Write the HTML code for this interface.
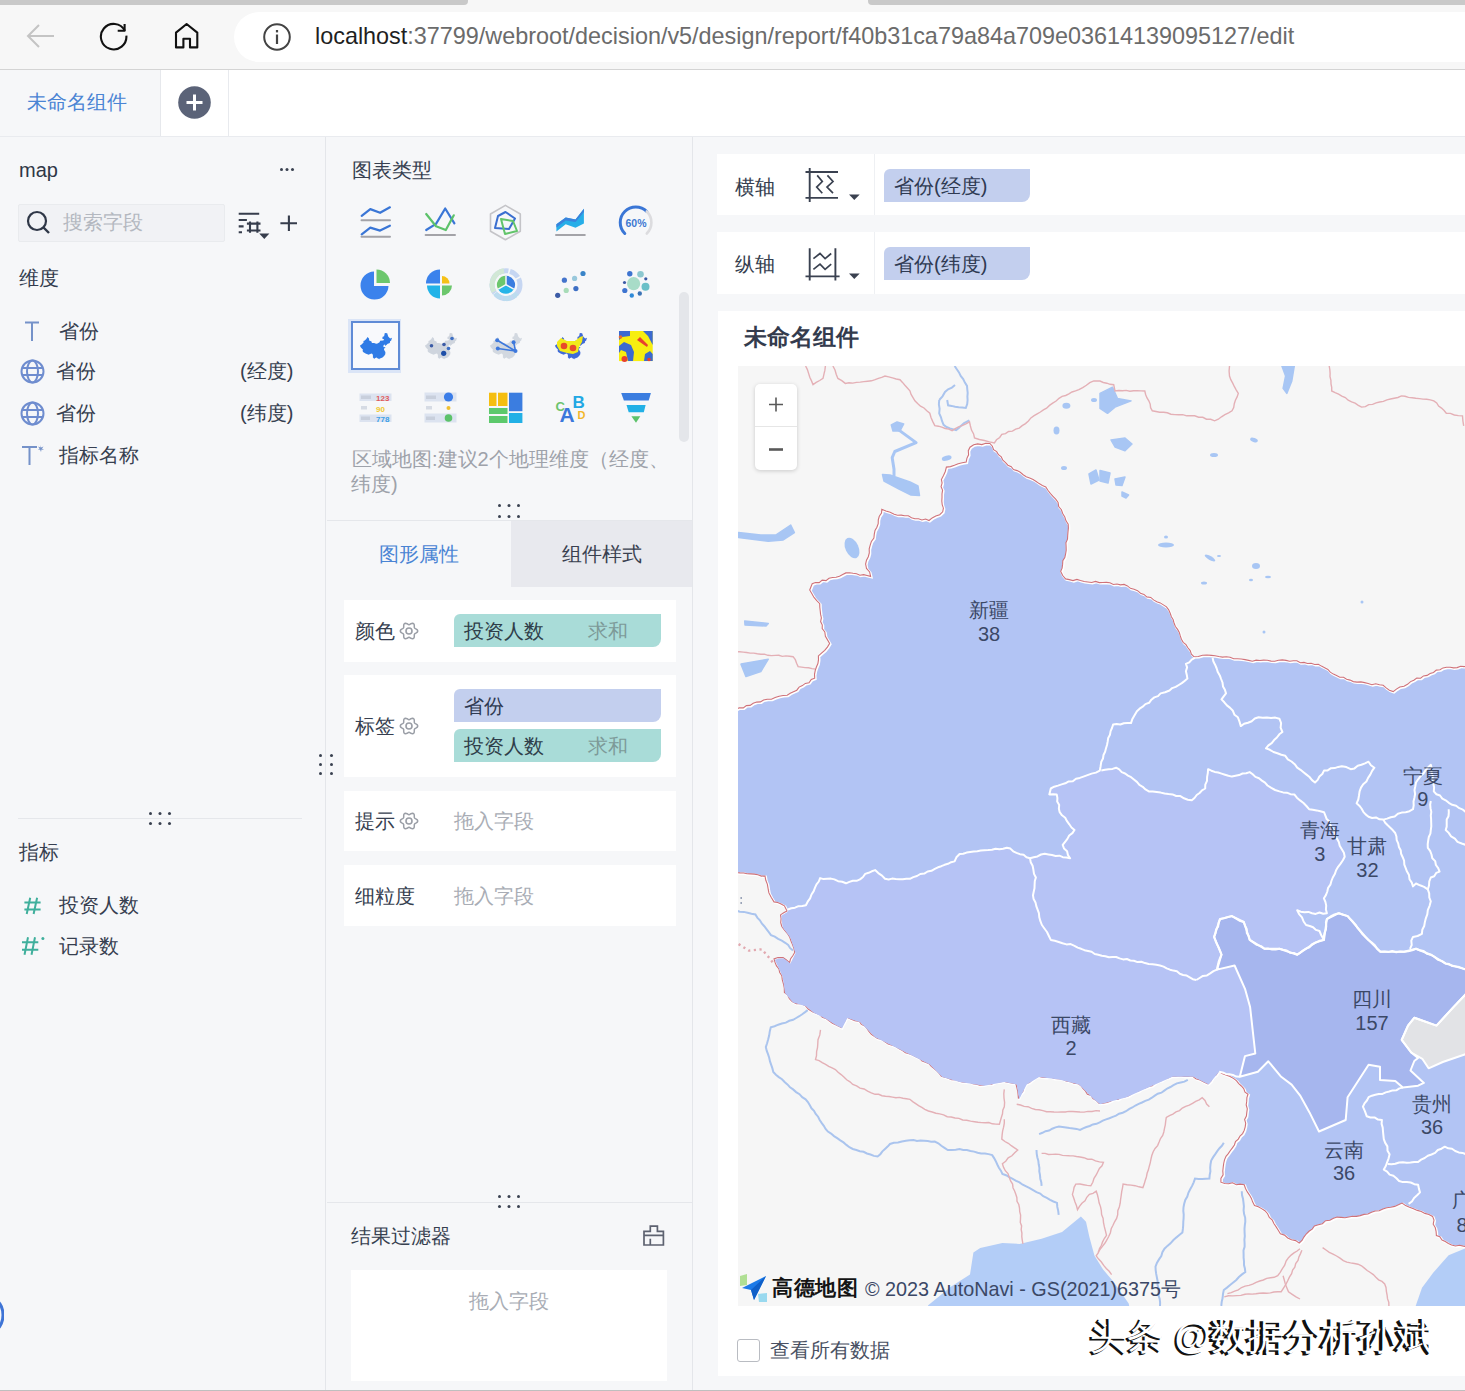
<!DOCTYPE html>
<html><head><meta charset="utf-8">
<style>
*{margin:0;padding:0;box-sizing:border-box}
html,body{width:1465px;height:1391px;overflow:hidden;background:#f7f7f7;font-family:"Liberation Sans",sans-serif;color:#373f50}
.a{position:absolute}
.t{position:absolute;white-space:nowrap;line-height:1;font-size:20px}
</style></head><body>
<!-- browser chrome -->
<div class="a" style="left:0;top:0;width:1465px;height:69px;background:#f7f7f7"></div>
<div class="a" style="left:0;top:0;width:468px;height:5px;background:#c9c9c9;border-radius:0 0 4px 0"></div>
<div class="a" style="left:868px;top:0;width:597px;height:5px;background:#c9c9c9;border-radius:0 0 0 4px"></div>
<div class="a" style="left:234px;top:12px;width:1300px;height:50px;background:#fff;border-radius:25px"></div>
<div class="a" style="left:0;top:69px;width:1465px;height:1px;background:#d4d4d4"></div>
<!-- back arrow -->
<svg class="a" style="left:24px;top:20px" width="34" height="32" viewBox="0 0 34 32"><path d="M4 16 H30 M15 5 L4 16 L15 27" fill="none" stroke="#c4c4c4" stroke-width="2"/></svg>
<!-- refresh -->
<svg class="a" style="left:98px;top:20px" width="32" height="32" viewBox="0 0 32 32"><path d="M28.35 15.54 A12.75 12.75 0 1 1 26.91 10.66" fill="none" stroke="#111" stroke-width="2.1"/><path d="M19.7 10.8 H26.6 V4" fill="none" stroke="#111" stroke-width="2.1" stroke-linejoin="round"/></svg>
<!-- home -->
<svg class="a" style="left:170px;top:18px" width="34" height="34" viewBox="170 18 34 34"><path d="M176 47.4 V32.6 L186.6 24 L197.3 32.6 V47.4 H190 V38.75 H183.4 V47.4 Z" fill="none" stroke="#111" stroke-width="2.1" stroke-linejoin="round"/></svg>
<!-- info -->
<svg class="a" style="left:262px;top:22px" width="30" height="30" viewBox="0 0 30 30"><circle cx="15" cy="15" r="12.8" fill="none" stroke="#444" stroke-width="2"/><rect x="13.9" y="8" width="2.2" height="2.4" fill="#444"/><rect x="13.9" y="12.5" width="2.2" height="9.5" fill="#444"/></svg>
<div class="t" style="left:315px;top:25px;font-size:23.4px;color:#1f1f1f">localhost<span style="color:#6b6b6b">:37799/webroot/decision/v5/design/report/f40b31ca79a84a709e03614139095127/edit</span></div>

<!-- tab row -->
<div class="a" style="left:0;top:70px;width:1465px;height:66px;background:#fff"></div>
<div class="a" style="left:0;top:70px;width:161px;height:66px;background:#f6f7f9;border-right:1px solid #e6e8ec"></div>
<div class="a" style="left:228px;top:70px;width:1px;height:66px;background:#e8eaee"></div>
<div class="t" style="left:27px;top:92px;color:#4a84d4">未命名组件</div>
<svg class="a" style="left:178px;top:86px" width="33" height="33" viewBox="0 0 33 33"><circle cx="16.5" cy="16.5" r="16.3" fill="#5b6378"/><path d="M16.5 8.5 V24.5 M8.5 16.5 H24.5" stroke="#fff" stroke-width="3"/></svg>
<div class="a" style="left:0;top:136px;width:1465px;height:1px;background:#e9ebef"></div>

<!-- left panel -->
<div class="a" style="left:0;top:137px;width:326px;height:1253px;background:#f6f7f9;border-right:1px solid #e4e6ea"></div>

<!-- left panel content -->
<div class="t" style="left:19px;top:160px;color:#2f3747">map</div>
<div class="a" style="left:280px;top:168px;width:3px;height:3px;border-radius:50%;background:#3a4150;box-shadow:5.5px 0 0 #3a4150,11px 0 0 #3a4150"></div>
<div class="a" style="left:18px;top:204px;width:207px;height:38px;background:#f1f2f5;border:1px solid #e9ebee;border-radius:2px"></div>
<svg class="a" style="left:25px;top:209px" width="28" height="28" viewBox="0 0 28 28"><circle cx="12" cy="12" r="9" fill="none" stroke="#2f3747" stroke-width="2.2"/><path d="M18.5 18.5 L24 24" stroke="#2f3747" stroke-width="2.4"/></svg>
<div class="t" style="left:63px;top:212px;color:#b4b8c0">搜索字段</div>
<svg class="a" style="left:230px;top:200px" width="45" height="45" viewBox="0 0 45 45"><g stroke="#363d4c" stroke-width="2.1" fill="none"><path d="M8.7 13.8 H29.2 M8.7 20 H16.9 M8.7 26.4 H13.6 M8.7 32.3 H12 M20 21.5 V32.8 M27.4 21.5 V32.8 M16.9 23.6 H30.5 M16.9 30.5 H30.5"/></g><path d="M29.2 33.5 H39.4 L34.3 39 Z" fill="#363d4c"/><path d="M58.9 15.4 V31 M50.4 23.3 H67" stroke="#363d4c" stroke-width="2.1"/></svg>
<svg class="a" style="left:275px;top:200px" width="30" height="45" viewBox="45 0 30 45"><path d="M58.9 15.4 V31 M50.4 23.3 H67" stroke="#363d4c" stroke-width="2.1"/></svg>
<div class="t" style="left:19px;top:268px;color:#333b4d">维度</div>

<svg class="a" style="left:22px;top:320px" width="20" height="22" viewBox="0 0 20 22"><path d="M3 2.5 H17 M10 2.5 V21" stroke="#7592c9" stroke-width="2"/></svg>
<div class="t" style="left:59px;top:321px">省份</div>
<svg class="a" style="left:20px;top:359px" width="25" height="25" viewBox="0 0 25 25"><g fill="none" stroke="#6f8dcf" stroke-width="2"><circle cx="12.5" cy="12.5" r="11"/><ellipse cx="12.5" cy="12.5" rx="5.5" ry="11"/><path d="M2.3 9 H22.7 M2.3 16 H22.7"/></g></svg>
<div class="t" style="left:56px;top:361px">省份</div>
<div class="t" style="left:240px;top:361px">(经度)</div>
<svg class="a" style="left:20px;top:401px" width="25" height="25" viewBox="0 0 25 25"><g fill="none" stroke="#6f8dcf" stroke-width="2"><circle cx="12.5" cy="12.5" r="11"/><ellipse cx="12.5" cy="12.5" rx="5.5" ry="11"/><path d="M2.3 9 H22.7 M2.3 16 H22.7"/></g></svg>
<div class="t" style="left:56px;top:403px">省份</div>
<div class="t" style="left:240px;top:403px">(纬度)</div>
<svg class="a" style="left:20px;top:444px" width="26" height="22" viewBox="0 0 26 22"><path d="M2 3 H17 M9.5 3 V21" stroke="#7592c9" stroke-width="2"/><path d="M20 1 L21 3.5 L23.5 2.5 L22 4.5 L24 6 L21.5 5.5 L21 8 L20 5.5 L18 6 L19.5 4.5 L18 2.5 L20.5 3.5Z" fill="#7592c9"/></svg>
<div class="t" style="left:59px;top:445px">指标名称</div>


<div class="a" style="left:18px;top:818px;width:284px;height:1px;background:#e5e7eb"></div>
<div class="a" style="left:149px;top:812px;width:3px;height:3px;border-radius:50%;background:#3a4150;box-shadow:9.5px 0 0 #3a4150,19px 0 0 #3a4150,0 10px 0 #3a4150,9.5px 10px 0 #3a4150,19px 10px 0 #3a4150"></div>
<div class="t" style="left:19px;top:842px">指标</div>
<svg class="a" style="left:20px;top:894px" width="24" height="24" viewBox="20 894 24 24"><path d="M30.2 897.8 L26.7 914 M37.1 897.8 L33.6 914 M24.4 902.5 H40.6 M24.4 909.4 H40.6" stroke="#3faf9c" stroke-width="2"/></svg>
<div class="t" style="left:59px;top:895px">投资人数</div>
<svg class="a" style="left:18px;top:932px" width="30" height="26" viewBox="18 932 30 26"><path d="M28 937.3 L24.5 954.7 M35 937.3 L31.5 954.7 M22 942.3 H38.3 M22 949.7 H38.3" stroke="#3faf9c" stroke-width="2"/><circle cx="42.9" cy="938.4" r="1.5" fill="#3faf9c"/></svg>

<div class="t" style="left:59px;top:936px">记录数</div>
<svg class="a" style="left:0;top:1298px" width="4" height="34" viewBox="0 0 4 34"><ellipse cx="-8" cy="17" rx="11" ry="16" fill="none" stroke="#3e74d6" stroke-width="3"/></svg>

<!-- middle panel -->
<div class="a" style="left:326px;top:137px;width:367px;height:1253px;background:#f6f7f9;border-right:1px solid #e4e6ea"></div>

<!-- middle panel content -->
<div class="t" style="left:352px;top:160px">图表类型</div>
<div class="a" style="left:348px;top:319px;width:53px;height:54px;background:#dbe5f7"></div>
<div class="a" style="left:351px;top:321px;width:49px;height:49px;background:#f8f9fc;border:2px solid #5f8bd6"></div>
<div class="a" style="left:679px;top:292px;width:10px;height:150px;background:#e4e6ea;border-radius:5px"></div>
<svg class="a" style="left:340px;top:190px" width="330" height="250" viewBox="340 190 330 250">
<g fill="none" stroke-linecap="round" stroke-linejoin="round">
 <path d="M361.7 215.9 L370.3 209.1 L380.1 212.8 L389.9 207.3 M361.7 234.3 L370.3 227.6 L380.1 230.6 L389.9 225.7" stroke="#3a76d6" stroke-width="2.2"/>
 <path d="M361.5 220.2 H390 M361.5 236.8 H390" stroke="#a3a3a8" stroke-width="2"/>
 <path d="M426.2 230 L436 223.9 L445.2 208.5 L454.4 223.3" stroke="#3a76d6" stroke-width="2.2"/>
 <path d="M426.2 214 L436 226.3 L445.8 230 L453.8 215.3" stroke="#5cc26a" stroke-width="2.2"/>
 <path d="M425.6 234.9 H455" stroke="#a3a3a8" stroke-width="2"/>
 <path d="M505.4 205.4 L520.3 214 V231.2 L505.4 239.8 L490.5 231.2 V214 Z" stroke="#c4c4c8" stroke-width="1.6"/>
 <path d="M505.5 212 L515 218.5 L509 229 L495 228 L498 216 Z" stroke="#3a6fd0" stroke-width="2"/>
 <path d="M501 219 L513 221 L517 231 L505 234 Z" stroke="#62c46a" stroke-width="2"/>
 <path d="M556 235.1 H584.8" stroke="#a3a3a8" stroke-width="2"/>
 <path d="M624.8 233.5 A15.5 15.5 0 1 1 646.8 211.5" stroke="#3a76d6" stroke-width="3"/>
 <path d="M646.8 211.5 A15.5 15.5 0 0 1 646.8 233.5" stroke="#dcdcdf" stroke-width="2.6"/>
</g>
<path d="M556.4 224.3 L565.7 217.6 L575.5 219.4 L583.9 208.8 V223.4 L575.5 227.8 L565.7 224.3 L556.4 231.4 Z" fill="#27aee8"/>
<path d="M556.4 224.3 L565.7 217.6 L575.5 219.4 L583.9 208.8 L583.9 212 L575.5 222 L565.7 220.6 L556.4 227.5 Z" fill="#3a82dc"/>
<text x="636" y="226.8" font-size="10.5" font-weight="bold" fill="#3d79d2" text-anchor="middle" font-family="Liberation Sans">60%</text>
<!-- pie -->
<path d="M374 271.5 A14 14 0 1 0 388.5 286 H374 Z" fill="#3b82ec"/>
<path d="M376.5 269.5 A13.5 13.5 0 0 1 390 283 H376.5 Z" fill="#6cc76d"/>
<!-- quarter pie -->
<path d="M440 269.5 A14 14 0 0 0 426 283.5 H440 Z" fill="#3b82ec"/>
<path d="M442 276 A7.5 7.5 0 0 1 449.5 283.5 H442 Z" fill="#f5c118"/>
<path d="M440 285.5 H427 A13 13 0 0 0 440 298.5 Z" fill="#22b3e8"/>
<path d="M442 285.5 H452 A10 10 0 0 1 442 295.5 Z" fill="#6cc76d"/>
<!-- donut -->
<g transform="translate(506 284.7)">
 <circle r="14" fill="none" stroke="#c6d6f2" stroke-width="5" stroke-dasharray="10 1.6"/>
 <path d="M-12 7 A14 14 0 0 1 -2 -13.9" fill="none" stroke="#d2e8d6" stroke-width="5"/>
 <path d="M-11 8.5 A14 14 0 0 0 11 8.5" fill="none" stroke="#bcdcef" stroke-width="5" stroke-dasharray="8 1.6"/>
 <path d="M0 -9 A9 9 0 0 1 7.8 4.5 L0 0Z" fill="#3b7de0"/>
 <path d="M7.8 4.5 A9 9 0 0 1 -7.8 4.5 L0 0Z" fill="#26b4e8"/>
 <path d="M-7.8 4.5 A9 9 0 0 1 0 -9 L0 0Z" fill="#6cc76d"/>
 <path d="M0 -9 L0 0 L7.8 4.5 M0 0 L-7.8 4.5" fill="none" stroke="#f5f6f8" stroke-width="1.5"/>
 <circle r="4" fill="#f5f6f8" opacity="0"/>
</g>
<!-- scatter -->
<circle cx="557.7" cy="295.3" r="2.6" fill="#3b5ba6"/>
<circle cx="566.2" cy="290.4" r="2.6" fill="#a8dcb8"/>
<circle cx="564.4" cy="280.2" r="2.6" fill="#4474cc"/>
<circle cx="574.6" cy="278.4" r="2.6" fill="#98c8dc"/>
<circle cx="575.9" cy="288.6" r="2.6" fill="#3d6fc4"/>
<circle cx="583" cy="273.5" r="2.6" fill="#3a84c8"/>
<!-- bubble -->
<circle cx="633.6" cy="283.7" r="6.6" fill="#a8dcc8"/>
<circle cx="629.8" cy="273.8" r="2.7" fill="#3d74d0"/>
<circle cx="640.5" cy="274.3" r="3.3" fill="#8cc8d0"/>
<circle cx="645.8" cy="278.8" r="1.6" fill="#3b5ba6"/>
<circle cx="624.5" cy="282.5" r="1.6" fill="#3b5ba6"/>
<circle cx="645.5" cy="286.7" r="4" fill="#6cc0c8"/>
<circle cx="624.8" cy="290.5" r="2.6" fill="#3d74d0"/>
<circle cx="631.8" cy="295.5" r="2.2" fill="#2f8ad8"/>
<circle cx="639.8" cy="293.5" r="2.2" fill="#3b74b6"/>
<!-- china map icons -->
<path d="M360.0 345.5 L360.5 347.1 L361.8 348.6 L362.9 349.4 L362.6 350.9 L363.1 352.0 L363.9 352.6 L366.0 353.8 L367.6 354.2 L368.1 354.7 L369.7 354.3 L371.5 353.4 L372.5 354.0 L373.1 356.3 L372.7 356.9 L373.6 358.2 L374.6 358.8 L375.2 358.0 L376.7 357.6 L377.4 358.3 L378.0 358.6 L379.1 359.0 L379.3 359.5 L379.6 358.6 L380.7 358.2 L382.5 357.6 L384.1 355.9 L385.3 354.2 L385.4 352.1 L384.7 350.9 L383.9 349.2 L384.6 348.1 L385.6 347.2 L384.8 346.9 L383.8 347.3 L383.3 346.3 L383.2 345.7 L385.1 344.3 L384.9 345.9 L386.4 345.1 L387.7 343.7 L388.6 343.4 L389.8 343.0 L390.2 340.9 L391.1 340.8 L392.0 337.8 L390.1 338.4 L388.2 336.6 L387.2 333.2 L384.8 333.0 L384.1 336.2 L382.7 336.7 L382.2 338.4 L384.2 339.4 L383.3 340.4 L380.1 340.8 L379.6 342.2 L377.5 343.4 L376.2 343.7 L374.1 342.9 L371.9 342.9 L371.5 341.5 L369.2 340.4 L369.0 338.4 L367.5 337.1 L366.3 339.0 L364.7 340.4 L363.4 340.9 L363.6 342.6 L361.3 344.7 Z" fill="#2f7be6"/>
<g transform="translate(65 0)">
<path d="M360.0 345.5 L360.5 347.1 L361.8 348.6 L362.9 349.4 L362.6 350.9 L363.1 352.0 L363.9 352.6 L366.0 353.8 L367.6 354.2 L368.1 354.7 L369.7 354.3 L371.5 353.4 L372.5 354.0 L373.1 356.3 L372.7 356.9 L373.6 358.2 L374.6 358.8 L375.2 358.0 L376.7 357.6 L377.4 358.3 L378.0 358.6 L379.1 359.0 L379.3 359.5 L379.6 358.6 L380.7 358.2 L382.5 357.6 L384.1 355.9 L385.3 354.2 L385.4 352.1 L384.7 350.9 L383.9 349.2 L384.6 348.1 L385.6 347.2 L384.8 346.9 L383.8 347.3 L383.3 346.3 L383.2 345.7 L385.1 344.3 L384.9 345.9 L386.4 345.1 L387.7 343.7 L388.6 343.4 L389.8 343.0 L390.2 340.9 L391.1 340.8 L392.0 337.8 L390.1 338.4 L388.2 336.6 L387.2 333.2 L384.8 333.0 L384.1 336.2 L382.7 336.7 L382.2 338.4 L384.2 339.4 L383.3 340.4 L380.1 340.8 L379.6 342.2 L377.5 343.4 L376.2 343.7 L374.1 342.9 L371.9 342.9 L371.5 341.5 L369.2 340.4 L369.0 338.4 L367.5 337.1 L366.3 339.0 L364.7 340.4 L363.4 340.9 L363.6 342.6 L361.3 344.7 Z" fill="#cfd5de"/>
</g>
<circle cx="431.5" cy="345.8" r="1.8" fill="#3b5ba6"/><circle cx="444" cy="344.5" r="1.8" fill="#3b5ba6"/><circle cx="448.5" cy="348.5" r="1.8" fill="#3d6fc4"/><circle cx="443.7" cy="353.3" r="2.6" fill="#1e4fa8"/><circle cx="452" cy="338.5" r="1.8" fill="#3d6fc4"/>
<g transform="translate(130 0)">
<path d="M360.0 345.5 L360.5 347.1 L361.8 348.6 L362.9 349.4 L362.6 350.9 L363.1 352.0 L363.9 352.6 L366.0 353.8 L367.6 354.2 L368.1 354.7 L369.7 354.3 L371.5 353.4 L372.5 354.0 L373.1 356.3 L372.7 356.9 L373.6 358.2 L374.6 358.8 L375.2 358.0 L376.7 357.6 L377.4 358.3 L378.0 358.6 L379.1 359.0 L379.3 359.5 L379.6 358.6 L380.7 358.2 L382.5 357.6 L384.1 355.9 L385.3 354.2 L385.4 352.1 L384.7 350.9 L383.9 349.2 L384.6 348.1 L385.6 347.2 L384.8 346.9 L383.8 347.3 L383.3 346.3 L383.2 345.7 L385.1 344.3 L384.9 345.9 L386.4 345.1 L387.7 343.7 L388.6 343.4 L389.8 343.0 L390.2 340.9 L391.1 340.8 L392.0 337.8 L390.1 338.4 L388.2 336.6 L387.2 333.2 L384.8 333.0 L384.1 336.2 L382.7 336.7 L382.2 338.4 L384.2 339.4 L383.3 340.4 L380.1 340.8 L379.6 342.2 L377.5 343.4 L376.2 343.7 L374.1 342.9 L371.9 342.9 L371.5 341.5 L369.2 340.4 L369.0 338.4 L367.5 337.1 L366.3 339.0 L364.7 340.4 L363.4 340.9 L363.6 342.6 L361.3 344.7 Z" fill="#d2d8e0"/>
</g>
<path d="M497.2 340.3 L515.5 351 M497.8 348.5 L515.5 351 M513.6 342.2 L515.5 351" fill="none" stroke="#3d78dc" stroke-width="1.6"/>

<circle cx="497.2" cy="340.3" r="2" fill="#3d78dc"/><circle cx="497.8" cy="348.5" r="2" fill="#3d78dc"/><circle cx="515.5" cy="351" r="2" fill="#3d78dc"/><circle cx="513.6" cy="342.2" r="2" fill="#3d78dc"/>
<g transform="translate(195 0)">
<path d="M360.0 345.5 L360.5 347.1 L361.8 348.6 L362.9 349.4 L362.6 350.9 L363.1 352.0 L363.9 352.6 L366.0 353.8 L367.6 354.2 L368.1 354.7 L369.7 354.3 L371.5 353.4 L372.5 354.0 L373.1 356.3 L372.7 356.9 L373.6 358.2 L374.6 358.8 L375.2 358.0 L376.7 357.6 L377.4 358.3 L378.0 358.6 L379.1 359.0 L379.3 359.5 L379.6 358.6 L380.7 358.2 L382.5 357.6 L384.1 355.9 L385.3 354.2 L385.4 352.1 L384.7 350.9 L383.9 349.2 L384.6 348.1 L385.6 347.2 L384.8 346.9 L383.8 347.3 L383.3 346.3 L383.2 345.7 L385.1 344.3 L384.9 345.9 L386.4 345.1 L387.7 343.7 L388.6 343.4 L389.8 343.0 L390.2 340.9 L391.1 340.8 L392.0 337.8 L390.1 338.4 L388.2 336.6 L387.2 333.2 L384.8 333.0 L384.1 336.2 L382.7 336.7 L382.2 338.4 L384.2 339.4 L383.3 340.4 L380.1 340.8 L379.6 342.2 L377.5 343.4 L376.2 343.7 L374.1 342.9 L371.9 342.9 L371.5 341.5 L369.2 340.4 L369.0 338.4 L367.5 337.1 L366.3 339.0 L364.7 340.4 L363.4 340.9 L363.6 342.6 L361.3 344.7 Z" fill="#3e6ad8"/>
<path d="M362 342 L366 338 L372 341 L380 341 L385 337 L388 336 L387 342 L384 347 L383 352 L378 354 L372 353 L365 351 L362 346 Z" fill="#f1ea1a"/>
<circle cx="369" cy="346" r="3.3" fill="#e84a2a"/><circle cx="378" cy="348" r="3.3" fill="#e84a2a"/>
</g>
<!-- heat square -->
<rect x="619" y="331" width="33.7" height="30.1" fill="#f7ee10"/>
<path d="M619 331 H630 V336 L622 337 L619 340Z M643 331 H652.7 V345 L648 336 Z M619 346 L624 342 L631 345 L634 352 L633 361.1 H628 L626 352 L621 350 L619 353Z M644 361.1 L645 354 L650 351 L652.7 354 V361.1Z" fill="#3b6ad0"/>
<circle cx="624.5" cy="359" r="3" fill="#e8412e"/><path d="M637 340 L640 337 L648 345 L647 347Z" fill="#e8412e"/><circle cx="620.5" cy="337" r="1.8" fill="#e86a2e"/><circle cx="649" cy="359.5" r="1.8" fill="#e8412e"/>
<!-- table icons -->
<rect x="359.5" y="393.5" width="32" height="7.5" fill="#dce3f0"/><rect x="359.5" y="414.5" width="32" height="7.5" fill="#dce3f0"/>
<rect x="361" y="395.5" width="10" height="3.5" fill="#c8cfdc"/><rect x="361" y="406" width="6" height="3.5" fill="#d6dbe4"/><rect x="361" y="416.5" width="9" height="3.5" fill="#c8cfdc"/>
<text x="376" y="400.5" font-size="8" font-weight="bold" fill="#e25a5a" font-family="Liberation Sans">123</text>
<text x="376" y="411.5" font-size="8" font-weight="bold" fill="#f0c830" font-family="Liberation Sans">90</text>
<text x="376" y="421.8" font-size="8" font-weight="bold" fill="#3aa0e8" font-family="Liberation Sans">778</text>
<rect x="424.5" y="392.5" width="32" height="9" fill="#dce3f0"/><rect x="424.5" y="413.5" width="32" height="9" fill="#dce3f0"/>
<rect x="426" y="395.5" width="10" height="3.5" fill="#c8cfdc"/><rect x="426" y="406" width="6" height="3.5" fill="#d6dbe4"/><rect x="426" y="416.5" width="9" height="3.5" fill="#c8cfdc"/>
<circle cx="448.5" cy="397" r="4.6" fill="#3b7de8"/><circle cx="448.5" cy="408" r="2" fill="#f0c030"/><circle cx="448.5" cy="418" r="3.8" fill="#5cc26a"/>
<!-- treemap -->
<rect x="489" y="392.7" width="7.5" height="13.3" fill="#f5be10"/><rect x="498" y="392.7" width="9.5" height="13.3" fill="#f5be10"/>
<rect x="509" y="392.7" width="13.4" height="18.5" fill="#3b7de0"/>
<rect x="489" y="408" width="18.5" height="6" fill="#5cc96c"/><rect x="489" y="416" width="18.5" height="7" fill="#5cc96c"/>
<rect x="509" y="413" width="13.4" height="10" fill="#22b0e6"/>
<!-- word cloud -->
<text x="555.5" y="410.5" font-size="13" font-weight="bold" fill="#6cc46e" font-family="Liberation Sans">C</text>
<text x="572.5" y="407.5" font-size="17" font-weight="bold" fill="#22a8e4" font-family="Liberation Sans">B</text>
<text x="559.5" y="421.5" font-size="21" font-weight="bold" fill="#3b78dc" font-family="Liberation Sans">A</text>
<text x="577.5" y="419" font-size="11" font-weight="bold" fill="#f2b62a" font-family="Liberation Sans">D</text>
<!-- funnel -->
<path d="M621.2 393 H650.9 L648.7 400.6 H623.9Z" fill="#3b7de0"/>
<path d="M626.5 405 H645.6 L643.8 412.2 H628.7Z" fill="#22b0e6"/>
<path d="M631.4 416.2 H640.3 L636 422.8Z" fill="#5cc26a"/>
</svg>
<div class="t" style="left:352px;top:449px;color:#9ea2aa;font-size:20px">区域地图:建议2个地理维度（经度、</div>
<div class="t" style="left:351px;top:474px;color:#9ea2aa;font-size:20px">纬度)</div>
<div class="a" style="left:498px;top:504px;width:3px;height:3px;border-radius:50%;background:#3a4150;box-shadow:9.5px 0 0 #3a4150,19px 0 0 #3a4150,0 11px 0 #3a4150,9.5px 11px 0 #3a4150,19px 11px 0 #3a4150"></div>
<div class="a" style="left:327px;top:520px;width:365px;height:1px;background:#e5e7eb"></div>
<div class="a" style="left:511px;top:521px;width:181px;height:66px;background:#e8e9ee"></div>
<div class="t" style="left:379px;top:544px;color:#4a84d4">图形属性</div>
<div class="t" style="left:562px;top:544px;color:#3a4150">组件样式</div>

<div class="a" style="left:344px;top:600px;width:332px;height:62px;background:#fff"></div>
<div class="a" style="left:344px;top:675px;width:332px;height:102px;background:#fff"></div>
<div class="a" style="left:344px;top:791px;width:332px;height:60px;background:#fff"></div>
<div class="a" style="left:344px;top:865px;width:332px;height:61px;background:#fff"></div>

<div class="t" style="left:355px;top:621px">颜色</div>
<div class="t" style="left:355px;top:716px">标签</div>
<div class="t" style="left:355px;top:811px">提示</div>
<div class="t" style="left:355px;top:886px">细粒度</div>
<svg class="a" style="left:398.6px;top:621px" width="20" height="20" viewBox="0 0 20 20"><path d="M10.00 3.70 L10.56 3.56 L11.20 3.20 L11.94 2.76 L12.77 2.39 L13.61 2.26 L14.35 2.47 L14.90 3.01 L15.21 3.80 L15.30 4.70 L15.29 5.56 L15.29 6.29 L15.46 6.85 L15.86 7.27 L16.48 7.64 L17.24 8.06 L17.98 8.59 L18.51 9.26 L18.70 10.00 L18.51 10.74 L17.98 11.41 L17.24 11.94 L16.48 12.36 L15.86 12.73 L15.46 13.15 L15.29 13.71 L15.29 14.44 L15.30 15.30 L15.21 16.20 L14.90 16.99 L14.35 17.53 L13.61 17.74 L12.77 17.61 L11.94 17.24 L11.20 16.80 L10.56 16.44 L10.00 16.30 L9.44 16.44 L8.80 16.80 L8.06 17.24 L7.23 17.61 L6.39 17.74 L5.65 17.53 L5.10 16.99 L4.79 16.20 L4.70 15.30 L4.71 14.44 L4.71 13.71 L4.54 13.15 L4.14 12.73 L3.52 12.36 L2.76 11.94 L2.02 11.41 L1.49 10.74 L1.30 10.00 L1.49 9.26 L2.02 8.59 L2.76 8.06 L3.52 7.64 L4.14 7.27 L4.54 6.85 L4.71 6.29 L4.71 5.56 L4.70 4.70 L4.79 3.80 L5.10 3.01 L5.65 2.47 L6.39 2.26 L7.23 2.39 L8.06 2.76 L8.80 3.20 L9.44 3.56 Z" fill="none" stroke="#9a9ea6" stroke-width="1.5" stroke-linejoin="round"/><circle cx="10" cy="10" r="3" fill="none" stroke="#9a9ea6" stroke-width="1.6"/></svg>
<svg class="a" style="left:398.6px;top:716px" width="20" height="20" viewBox="0 0 20 20"><path d="M10.00 3.70 L10.56 3.56 L11.20 3.20 L11.94 2.76 L12.77 2.39 L13.61 2.26 L14.35 2.47 L14.90 3.01 L15.21 3.80 L15.30 4.70 L15.29 5.56 L15.29 6.29 L15.46 6.85 L15.86 7.27 L16.48 7.64 L17.24 8.06 L17.98 8.59 L18.51 9.26 L18.70 10.00 L18.51 10.74 L17.98 11.41 L17.24 11.94 L16.48 12.36 L15.86 12.73 L15.46 13.15 L15.29 13.71 L15.29 14.44 L15.30 15.30 L15.21 16.20 L14.90 16.99 L14.35 17.53 L13.61 17.74 L12.77 17.61 L11.94 17.24 L11.20 16.80 L10.56 16.44 L10.00 16.30 L9.44 16.44 L8.80 16.80 L8.06 17.24 L7.23 17.61 L6.39 17.74 L5.65 17.53 L5.10 16.99 L4.79 16.20 L4.70 15.30 L4.71 14.44 L4.71 13.71 L4.54 13.15 L4.14 12.73 L3.52 12.36 L2.76 11.94 L2.02 11.41 L1.49 10.74 L1.30 10.00 L1.49 9.26 L2.02 8.59 L2.76 8.06 L3.52 7.64 L4.14 7.27 L4.54 6.85 L4.71 6.29 L4.71 5.56 L4.70 4.70 L4.79 3.80 L5.10 3.01 L5.65 2.47 L6.39 2.26 L7.23 2.39 L8.06 2.76 L8.80 3.20 L9.44 3.56 Z" fill="none" stroke="#9a9ea6" stroke-width="1.5" stroke-linejoin="round"/><circle cx="10" cy="10" r="3" fill="none" stroke="#9a9ea6" stroke-width="1.6"/></svg>
<svg class="a" style="left:398.6px;top:811px" width="20" height="20" viewBox="0 0 20 20"><path d="M10.00 3.70 L10.56 3.56 L11.20 3.20 L11.94 2.76 L12.77 2.39 L13.61 2.26 L14.35 2.47 L14.90 3.01 L15.21 3.80 L15.30 4.70 L15.29 5.56 L15.29 6.29 L15.46 6.85 L15.86 7.27 L16.48 7.64 L17.24 8.06 L17.98 8.59 L18.51 9.26 L18.70 10.00 L18.51 10.74 L17.98 11.41 L17.24 11.94 L16.48 12.36 L15.86 12.73 L15.46 13.15 L15.29 13.71 L15.29 14.44 L15.30 15.30 L15.21 16.20 L14.90 16.99 L14.35 17.53 L13.61 17.74 L12.77 17.61 L11.94 17.24 L11.20 16.80 L10.56 16.44 L10.00 16.30 L9.44 16.44 L8.80 16.80 L8.06 17.24 L7.23 17.61 L6.39 17.74 L5.65 17.53 L5.10 16.99 L4.79 16.20 L4.70 15.30 L4.71 14.44 L4.71 13.71 L4.54 13.15 L4.14 12.73 L3.52 12.36 L2.76 11.94 L2.02 11.41 L1.49 10.74 L1.30 10.00 L1.49 9.26 L2.02 8.59 L2.76 8.06 L3.52 7.64 L4.14 7.27 L4.54 6.85 L4.71 6.29 L4.71 5.56 L4.70 4.70 L4.79 3.80 L5.10 3.01 L5.65 2.47 L6.39 2.26 L7.23 2.39 L8.06 2.76 L8.80 3.20 L9.44 3.56 Z" fill="none" stroke="#9a9ea6" stroke-width="1.5" stroke-linejoin="round"/><circle cx="10" cy="10" r="3" fill="none" stroke="#9a9ea6" stroke-width="1.6"/></svg>

<div class="a" style="left:454px;top:614px;width:207px;height:33px;background:#a9dcd8;border-radius:6px 0 8px 0"></div>
<div class="t" style="left:464px;top:621px;color:#2f3f4a">投资人数</div>
<div class="t" style="left:588px;top:621px;color:#7d9a98">求和</div>
<div class="a" style="left:454px;top:689px;width:207px;height:33px;background:#c3cfee;border-radius:6px 0 8px 0"></div>
<div class="t" style="left:464px;top:696px;color:#2f3a52">省份</div>
<div class="a" style="left:454px;top:729px;width:207px;height:33px;background:#a9dcd8;border-radius:6px 0 8px 0"></div>
<div class="t" style="left:464px;top:736px;color:#2f3f4a">投资人数</div>
<div class="t" style="left:588px;top:736px;color:#7d9a98">求和</div>
<div class="t" style="left:454px;top:811px;color:#a9adb5">拖入字段</div>
<div class="t" style="left:454px;top:886px;color:#a9adb5">拖入字段</div>

<div class="a" style="left:327px;top:1202px;width:365px;height:1px;background:#e5e7eb"></div>
<div class="a" style="left:498px;top:1195px;width:3px;height:3px;border-radius:50%;background:#3a4150;box-shadow:9.5px 0 0 #3a4150,19px 0 0 #3a4150,0 10px 0 #3a4150,9.5px 10px 0 #3a4150,19px 10px 0 #3a4150"></div>
<div class="t" style="left:351px;top:1226px">结果过滤器</div>
<svg class="a" style="left:638px;top:1220px" width="30" height="30" viewBox="638 1220 30 30"><path d="M644 1245 V1231.4 H650.3 V1226.2 H657.4 V1231.4 H663.4 V1245 Z M644 1235.3 H663.4 M650.3 1238.8 V1245" fill="none" stroke="#5d6270" stroke-width="1.7"/></svg>
<div class="a" style="left:351px;top:1270px;width:316px;height:111px;background:#fff"></div>
<div class="t" style="left:469px;top:1291px;color:#a9adb5">拖入字段</div>

<!-- right panel -->
<div class="a" style="left:693px;top:137px;width:772px;height:1253px;background:#f6f7f9"></div>

<!-- right panel content -->
<div class="a" style="left:717px;top:154px;width:748px;height:61px;background:#fff"></div>
<div class="a" style="left:717px;top:232px;width:748px;height:62px;background:#fff"></div>
<div class="a" style="left:874px;top:154px;width:1px;height:61px;background:#eef0f3"></div>
<div class="a" style="left:874px;top:232px;width:1px;height:62px;background:#eef0f3"></div>
<div class="t" style="left:735px;top:177px">横轴</div>
<div class="t" style="left:735px;top:254px">纵轴</div>
<svg class="a" style="left:800px;top:164px" width="64" height="44" viewBox="800 164 64 44"><g fill="none" stroke="#3a4150" stroke-width="1.9"><path d="M809.7 168 V202 M805.5 172 H838 M805.5 197.9 H838"/><path d="M817.2 175.4 L822.3 181.5 L816.7 187.1 L822.3 193.2 M827.4 175.4 L833 181.5 L827 187.1 L833 193.2" stroke-width="1.7"/></g><path d="M849 194.6 H859.7 L854.3 199.9 Z" fill="#3a4150"/></svg>
<svg class="a" style="left:800px;top:242px" width="64" height="44" viewBox="800 242 64 44"><g fill="none" stroke="#3a4150" stroke-width="1.9"><path d="M809.7 248.3 V280.6 M835.4 248.3 V280.6 M805.5 276.4 H839.6"/><path d="M813.4 258.6 L820 253.5 L825.1 258.6 L831.2 253.5 M813.4 269.3 L820 264.2 L825.1 269.3 L831.2 264.2" stroke-width="1.7"/></g><path d="M849 273.6 H859.7 L854.3 278.9 Z" fill="#3a4150"/></svg>
<div class="a" style="left:884px;top:169px;width:146px;height:33px;background:#c3cfee;border-radius:6px 0 8px 0"></div>
<div class="t" style="left:894px;top:176px;color:#2f3a52">省份(经度)</div>
<div class="a" style="left:884px;top:247px;width:146px;height:33px;background:#c3cfee;border-radius:6px 0 8px 0"></div>
<div class="t" style="left:894px;top:254px;color:#2f3a52">省份(纬度)</div>

<div class="a" style="left:718px;top:311px;width:747px;height:1065px;background:#fff"></div>
<div class="t" style="left:744px;top:326px;font-size:23px;font-weight:bold;color:#333b4d">未命名组件</div>
<div class="a" style="left:738px;top:366px;width:727px;height:940px;background:#f6f6f6;overflow:hidden" id="map">
<svg width="727" height="940" viewBox="738 366 727 940" style="position:absolute;left:0;top:0">
<path d="M928.2 1305.3 L951.2 1286.5 L970.0 1274.6 L973.4 1252.4 L980.2 1248.1 L1002.4 1243.0 L1019.5 1243.9 L1041.6 1238.7 L1062.1 1231.9 L1080.9 1216.6 L1086.0 1221.7 L1089.4 1237.0 L1094.5 1255.8 L1103.1 1269.5 L1113.3 1281.4 L1128.7 1303.6 L1130.0 1310.0 L926.0 1310.0 Z" fill="#b3cdf7"/>
<path d="M738.6 944.1 L748.9 950.6 L761.9 949.3 L769.7 958.4 L773.5 963.5" fill="none" stroke="#e2a9b0" stroke-width="2.4" stroke-dasharray="2.2 3.5"/>
<path d="M741.2 897 V906" fill="none" stroke="#9aa4b8" stroke-width="1.6" stroke-dasharray="2 3"/>
<path d="M1466.0 1248.0 L1448.6 1255.3 L1433.4 1272.5 L1422.0 1287.7 L1414.3 1310.0 L1466.0 1310.0 Z" fill="#b3cdf7"/>
<path d="M882.5 474.5 L890.0 475.0 L897.0 477.5 L910.0 482.0 L918.0 486.0 L919.5 495.5 L911.0 495.0 L899.0 489.0 L884.0 481.0 Z" fill="#a8c6f4" stroke="#a8c6f4" stroke-width="1.5" stroke-linejoin="round"/>
<path d="M891.3 425.0 L897.0 422.0 L903.7 424.0 L900.0 431.0 L893.0 431.0 Z" fill="#a8c6f4" stroke="#a8c6f4" stroke-width="1.5" stroke-linejoin="round"/>
<path d="M738.5 532.5 L760.8 535.0 L775.7 535.0 L790.7 525.0 L794.4 532.5 L783.2 539.9 L768.3 541.2 L738.5 537.4 Z" fill="#a8c6f4" stroke="#a8c6f4" stroke-width="1.5" stroke-linejoin="round"/>
<path d="M741.0 664.1 L768.3 659.2 L760.8 671.6 L746.0 676.6 Z" fill="#a8c6f4" stroke="#a8c6f4" stroke-width="1.5" stroke-linejoin="round"/>
<path d="M744.7 621.0 L768.3 623.4 L766.0 626.0 L745.0 625.0 Z" fill="#a8c6f4" stroke="#a8c6f4" stroke-width="1.5" stroke-linejoin="round"/>
<path d="M1100.0 393.4 L1112.5 387.2 L1117.4 398.4 L1131.1 400.9 L1115.0 407.1 L1107.5 413.3 L1100.0 408.4 Z" fill="#a8c6f4" stroke="#a8c6f4" stroke-width="1.5" stroke-linejoin="round"/>
<path d="M1281.9 366.0 L1294.3 366.0 L1291.8 381.0 L1286.8 393.4 L1283.1 388.4 L1285.6 376.0 Z" fill="#a8c6f4" stroke="#a8c6f4" stroke-width="1.5" stroke-linejoin="round"/>
<path d="M1111.0 440.0 L1125.0 438.0 L1132.0 444.0 L1125.0 450.7 L1115.0 447.0 Z" fill="#a8c6f4" stroke="#a8c6f4" stroke-width="1.5" stroke-linejoin="round"/>
<path d="M1100.0 470.6 L1110.0 473.0 L1108.0 483.0 L1100.0 481.0 Z" fill="#a8c6f4" stroke="#a8c6f4" stroke-width="1.5" stroke-linejoin="round"/>
<path d="M1115.0 479.0 L1125.0 477.0 L1122.0 485.6 L1116.0 485.0 Z" fill="#a8c6f4" stroke="#a8c6f4" stroke-width="1.5" stroke-linejoin="round"/>
<path d="M1122.0 492.0 L1128.6 495.0 L1126.0 498.0 L1122.0 496.0 Z" fill="#a8c6f4" stroke="#a8c6f4" stroke-width="1.5" stroke-linejoin="round"/>
<path d="M1089.0 474.0 L1096.0 470.0 L1099.0 480.0 L1091.0 484.0 Z" fill="#a8c6f4" stroke="#a8c6f4" stroke-width="1.5" stroke-linejoin="round"/>
<ellipse cx="1204" cy="583" rx="3" ry="1.5" fill="#a8c6f4"/>
<ellipse cx="1251" cy="580" rx="2" ry="1.2" fill="#a8c6f4"/>
<ellipse cx="1268" cy="577" rx="3" ry="1.2" fill="#a8c6f4"/>
<ellipse cx="1264" cy="632" rx="1.5" ry="1.5" fill="#a8c6f4"/>
<ellipse cx="1362" cy="602" rx="1.5" ry="1.5" fill="#a8c6f4"/>
<ellipse cx="1166" cy="537" rx="2" ry="1.5" fill="#a8c6f4"/>
<ellipse cx="1219" cy="556" rx="2" ry="1" fill="#a8c6f4"/>
<ellipse cx="852" cy="548" rx="6.5" ry="11" transform="rotate(-25 852 548)" fill="#a8c6f4"/>
<ellipse cx="946.7" cy="458.1" rx="5" ry="2.5" transform="rotate(-15 946.7 458.1)" fill="#a8c6f4"/>
<ellipse cx="1066.4" cy="405.8" rx="4" ry="3" transform="rotate(0 1066.4 405.8)" fill="#a8c6f4"/>
<ellipse cx="1056.5" cy="430.6" rx="3" ry="4" transform="rotate(0 1056.5 430.6)" fill="#a8c6f4"/>
<ellipse cx="1166" cy="545" rx="8" ry="2.5" transform="rotate(0 1166 545)" fill="#a8c6f4"/>
<ellipse cx="1210" cy="558" rx="6" ry="2" transform="rotate(30 1210 558)" fill="#a8c6f4"/>
<ellipse cx="1256" cy="566" rx="4" ry="3" transform="rotate(0 1256 566)" fill="#a8c6f4"/>
<ellipse cx="1254" cy="440" rx="4" ry="2" transform="rotate(20 1254 440)" fill="#a8c6f4"/>
<ellipse cx="1214" cy="455" rx="4" ry="2" transform="rotate(0 1214 455)" fill="#a8c6f4"/>
<ellipse cx="1064" cy="468" rx="3" ry="2" transform="rotate(0 1064 468)" fill="#a8c6f4"/>
<ellipse cx="1094" cy="400" rx="3" ry="2" transform="rotate(0 1094 400)" fill="#a8c6f4"/>
<path d="M954.6 366.0 L956.8 369.2 L959.0 372.4 L960.7 376.0 L963.2 379.0 L964.9 382.6 L967.0 385.9 L967.3 389.4 L967.7 392.9 L967.4 396.5 L967.6 400.0 L967.2 404.1 L965.8 408.0 L962.2 407.5 L958.7 407.3 L955.1 406.8 L951.6 405.9 L948.1 405.3 L947.2 400.0" fill="none" stroke="#aac4ee" stroke-width="2"/>
<path d="M939.2 400.0 L938.9 404.4 L939.6 408.9 L939.2 413.3 L940.9 417.0 L942.0 421.0 L943.6 424.8 L946.5 427.0 L949.9 428.4 L956.1 430.2 L958.8 427.9 L961.4 425.4 L964.1 423.1 L969.4 420.4" fill="none" stroke="#aac4ee" stroke-width="2"/>
<path d="M939.2 400.0 L942.5 396.3 L945.0 392.0 L948.1 389.3 L951.9 387.6 L955.0 385.0" fill="none" stroke="#aac4ee" stroke-width="2"/>
<path d="M808.0 1009.9 L805.1 1012.1 L802.2 1014.2 L799.3 1016.2 L796.2 1018.0 L793.1 1019.8 L789.3 1020.8 L785.8 1022.6 L781.9 1023.5 L778.2 1024.7 L774.6 1026.2 L770.8 1027.3 L769.8 1031.2 L769.2 1035.3 L768.2 1039.3 L767.1 1043.2 L765.8 1047.1 L766.7 1050.7 L768.0 1054.2 L769.2 1057.7 L770.0 1061.4 L771.2 1064.9 L772.4 1068.4 L773.3 1072.0 L775.9 1074.7 L778.8 1077.1 L782.0 1079.3 L784.6 1082.0 L787.4 1084.4 L790.0 1087.2 L793.1 1089.4 L796.1 1092.1 L799.5 1094.2 L802.2 1097.2 L805.6 1099.3 L807.9 1102.0 L809.7 1105.1 L811.5 1108.3 L814.0 1110.8 L815.7 1114.0 L818.1 1116.7 L819.7 1120.0 L821.6 1122.9 L823.8 1125.8 L825.6 1128.9 L827.9 1131.6 L831.1 1133.6 L834.0 1136.1 L837.2 1138.2 L840.3 1140.4 L843.5 1142.4 L846.4 1144.9 L849.4 1147.2 L852.8 1149.0 L856.4 1150.0 L859.8 1151.3 L863.6 1151.8 L866.9 1153.5 L870.5 1154.5 L873.9 1155.9 L877.6 1156.5 L880.3 1154.2 L882.4 1151.3 L885.0 1148.9 L887.6 1146.6 L890.0 1144.0 L893.9 1142.8 L898.0 1142.5 L901.9 1141.5 L905.9 1140.7 L909.9 1140.3 L913.5 1140.0 L917.0 1140.9 L920.6 1140.5 L924.1 1140.8 L927.7 1141.1 L931.2 1141.8 L934.8 1141.6 L938.3 1143.3 L941.3 1145.8 L944.5 1147.9 L947.8 1150.0 L951.8 1150.0 L955.7 1149.7 L959.6 1149.0 L963.2 1150.0 L966.9 1150.1 L970.5 1151.0 L974.1 1151.6 L977.6 1152.8 L981.2 1153.5 L985.0 1153.4 L988.6 1154.1 L992.2 1155.1 L994.1 1158.1 L995.8 1161.2 L997.3 1164.5 L998.9 1167.7 L1000.9 1170.7 L1002.4 1173.9 L1006.0 1175.2 L1009.3 1177.2 L1012.7 1178.9 L1016.1 1180.8 L1019.5 1182.4 L1022.7 1184.7 L1026.2 1186.4 L1029.7 1188.2 L1033.1 1190.2 L1036.5 1192.2 L1040.2 1193.6 L1043.2 1196.2 L1046.8 1197.8 L1050.1 1199.8 L1053.4 1201.5 L1057.0 1202.9 L1057.3 1206.9 L1058.2 1210.8 L1058.7 1214.8" fill="none" stroke="#aac4ee" stroke-width="2"/>
<path d="M1039.1 1134.1 L1042.4 1132.8 L1045.6 1131.2 L1049.1 1130.5 L1052.2 1128.7 L1055.5 1127.4 L1059.0 1126.6 L1062.5 1126.9 L1066.1 1127.4 L1069.5 1128.1 L1073.1 1128.4 L1076.6 1128.9 L1080.0 1130.0 L1083.1 1128.4 L1086.4 1127.0 L1089.8 1126.0 L1092.9 1124.4 L1096.5 1123.8 L1099.7 1122.3 L1102.8 1120.6 L1106.1 1119.4 L1109.4 1118.2 L1112.7 1116.9 L1116.0 1115.7 L1119.1 1113.7 L1122.7 1112.7 L1126.0 1111.2 L1129.0 1109.1 L1132.3 1107.5 L1135.4 1105.5 L1138.7 1103.9 L1142.0 1102.5 L1145.3 1100.8 L1148.8 1099.6 L1151.9 1097.7 L1154.8 1095.6 L1157.8 1093.7 L1161.4 1092.7 L1164.3 1090.6 L1167.2 1088.5 L1170.4 1087.0 L1173.5 1085.2 L1176.9 1083.4 L1180.7 1082.5 L1184.4 1081.6 L1187.8 1079.8" fill="none" stroke="#aac4ee" stroke-width="2"/>
<path d="M1036.5 1150.0 L1036.7 1153.6 L1037.3 1157.2 L1038.3 1160.7 L1038.7 1164.3 L1039.4 1167.9 L1039.3 1171.5 L1040.0 1175.1 L1040.3 1178.7 L1041.3 1182.2 L1041.6 1185.8" fill="none" stroke="#aac4ee" stroke-width="2"/>
<path d="M1223.8 1142.7 L1221.9 1145.8 L1219.3 1148.5 L1217.1 1151.4 L1215.1 1154.4 L1213.0 1157.4 L1211.2 1160.6 L1210.5 1164.2 L1210.2 1167.8 L1210.4 1171.4 L1209.7 1175.0 L1209.4 1178.6 L1205.8 1178.7 L1202.2 1179.1 L1198.6 1179.1 L1195.0 1178.6 L1193.7 1182.3 L1192.1 1185.9 L1190.2 1189.3 L1188.4 1192.8 L1187.3 1196.6 L1185.3 1200.0 L1184.2 1203.8 L1183.5 1207.4 L1183.3 1210.9 L1183.7 1214.6 L1183.6 1218.2 L1183.3 1221.8 L1183.2 1225.3 L1182.9 1228.9 L1182.4 1232.5 L1179.3 1235.1 L1176.2 1237.6 L1173.2 1240.3 L1170.5 1243.3 L1167.4 1245.9 L1164.5 1248.7 L1162.4 1252.2 L1161.3 1256.1 L1159.0 1259.4 L1156.9 1262.9 L1155.5 1266.7 L1155.7 1270.3 L1156.2 1273.9 L1156.9 1277.5 L1157.6 1281.0 L1157.5 1284.7 L1158.4 1288.2 L1158.4 1291.9 L1158.6 1295.5 L1159.7 1299.0 L1160.1 1302.6 L1160.0 1306.3 L1160.9 1309.8" fill="none" stroke="#aac4ee" stroke-width="2"/>
<path d="M1241.8 1191.2 L1242.0 1195.0 L1243.0 1198.8 L1243.5 1202.6 L1243.9 1206.4 L1243.6 1210.3 L1244.1 1214.1 L1245.2 1217.8 L1245.3 1221.7 L1244.8 1225.3 L1244.5 1228.9 L1244.6 1232.5 L1244.8 1236.1 L1244.4 1239.7 L1244.6 1243.3 L1244.6 1246.9 L1243.5 1250.5 L1243.6 1254.1 L1243.6 1257.7 L1244.0 1261.3 L1244.0 1265.0 L1244.9 1268.5 L1245.3 1272.1 L1242.0 1274.4 L1238.9 1277.0 L1236.3 1280.0 L1233.2 1282.5 L1230.1 1285.0 L1227.0 1287.6 L1223.8 1290.0 L1223.0 1293.9 L1222.6 1298.0 L1221.7 1301.9 L1221.3 1305.9 L1220.2 1309.8" fill="none" stroke="#aac4ee" stroke-width="2"/>
<path d="M736.0 910.5 L739.8 911.7 L743.8 911.9 L747.6 912.8 L751.5 913.7 L755.4 914.4 L757.3 917.6 L759.9 920.3 L761.8 923.5 L764.3 926.2 L766.5 929.2 L768.8 932.2 L771.0 935.1 L774.8 936.6 L778.1 938.9 L781.8 940.6 L785.2 942.8 L788.2 945.0 L790.2 948.2 L793.0 950.6" fill="none" stroke="#aac4ee" stroke-width="2"/>
<path d="M896.6 428.4 L916.1 442.6 L894.8 451.5 L892.2 457.7 L894 469.2 L894 476" fill="none" stroke="#a8c6f4" stroke-width="3" stroke-linejoin="round"/>
<path d="M805.6 366.0 L807.4 369.6 L808.6 373.4 L809.8 377.3 L811.5 380.9 L813.0 384.6 L816.2 382.4 L819.7 380.5 L823.0 378.4 L823.9 374.3 L824.9 370.2 L825.4 366.0" fill="none" stroke="#e4b0b6" stroke-width="1.4"/>
<path d="M832.9 366.0 L835.0 370.0 L836.2 374.3 L837.9 378.4 L841.8 380.6 L845.3 383.4 L849.0 382.8 L852.8 383.1 L856.5 382.4 L860.2 382.1 L863.9 381.6 L867.7 381.2 L871.5 380.8 L875.1 379.7 L878.4 378.4 L881.7 377.4 L885.0 376.0 L888.7 376.9 L892.5 377.9 L896.2 379.0 L900.0 379.7 L902.5 382.4 L904.9 385.3 L907.4 388.0 L909.9 390.8 L911.1 394.4 L913.0 397.6 L914.9 400.8 L917.6 403.6 L920.5 406.2 L924.0 408.0 L926.8 410.8 L929.8 413.2 L931.0 417.5 L932.8 421.6 L934.8 425.6 L938.4 426.2 L941.8 427.2 L945.2 428.5 L948.8 429.1 L952.1 430.6 L955.3 428.7 L958.5 426.8 L962.1 425.6 L965.9 423.9 L969.5 421.9 L970.4 426.0 L971.5 430.1 L973.6 433.9 L974.5 438.0 L979.4 439.5 L984.4 440.5 L989.4 441.9 L994.4 443.0 L996.5 439.8 L999.7 437.5 L1001.8 434.3 L1005.5 433.6 L1008.6 431.5 L1012.4 431.1 L1015.7 429.2 L1019.2 428.1 L1022.2 425.6 L1025.5 423.6 L1028.4 421.0 L1030.9 417.9 L1034.1 415.7 L1037.2 413.8 L1040.4 412.0 L1043.4 409.9 L1046.6 408.2 L1049.5 405.4 L1052.7 403.1 L1056.1 401.0 L1059.0 398.3 L1062.1 396.3 L1065.7 395.5 L1068.9 393.9 L1072.0 392.0 L1075.5 390.9 L1078.9 389.6 L1082.7 387.6 L1086.4 385.3 L1089.8 382.6 L1093.8 380.9 L1100.0 381.0 L1103.3 382.5 L1106.8 383.2 L1110.1 384.3 L1113.7 384.7 L1115.0 391.0 L1118.7 390.5 L1122.5 390.7 L1126.2 390.4 L1129.9 391.3 L1133.6 390.7 L1137.3 390.6 L1141.1 390.9 L1144.8 391.0 L1145.6 394.5 L1146.9 397.7 L1148.8 400.8 L1150.2 404.1 L1150.6 407.7 L1152.3 410.8 L1156.0 411.5 L1159.7 412.3 L1163.6 412.2 L1167.3 412.8 L1170.9 414.2 L1174.7 414.6 L1178.7 414.8 L1182.7 414.6 L1186.7 415.8 L1190.7 415.7 L1194.7 415.8 L1198.6 417.2 L1202.8 417.3 L1206.5 419.2 L1210.7 419.3 L1214.6 420.8 L1218.3 419.2 L1221.5 416.8 L1224.9 414.6 L1228.6 412.9 L1232.0 410.8 L1233.7 407.5 L1234.3 403.7 L1235.4 400.2 L1237.1 396.9 L1238.3 393.4 L1236.3 390.1 L1234.4 386.7 L1232.7 383.1 L1230.8 379.7 L1229.5 376.0 L1229.1 371.0 L1229.5 366.0" fill="none" stroke="#e4b0b6" stroke-width="1.4"/>
<path d="M1329.2 366.0 L1329.8 369.5 L1330.1 373.1 L1330.0 376.7 L1330.9 380.3 L1331.0 383.9 L1331.7 387.4 L1331.7 391.0 L1335.1 392.6 L1338.6 394.1 L1341.8 396.1 L1345.3 397.6 L1348.2 400.2 L1351.6 401.8 L1355.1 403.2 L1358.3 405.3 L1361.6 407.1 L1365.4 406.6 L1368.7 404.6 L1372.6 404.4 L1376.1 402.9 L1379.7 402.0 L1383.4 401.4 L1386.9 399.8 L1390.5 399.0 L1394.2 398.2 L1397.9 397.5 L1401.4 395.9 L1405.0 396.3 L1408.5 397.4 L1412.2 397.8 L1415.8 398.3 L1419.4 398.6 L1423.0 399.1 L1426.7 399.3 L1430.3 399.9 L1433.8 400.9 L1436.7 403.0 L1438.6 406.1 L1441.5 408.1 L1444.1 410.5 L1446.3 413.3 L1450.4 413.4 L1454.3 415.0 L1458.4 415.6 L1462.5 415.8 L1462.9 420.8 L1463.7 425.8" fill="none" stroke="#e4b0b6" stroke-width="1.4"/>
<path d="M736.0 651.7 L739.6 651.8 L743.1 652.1 L746.7 652.5 L750.2 653.1 L753.8 653.1 L757.3 653.8 L760.8 654.2 L764.4 654.2 L767.9 655.3 L771.5 655.6 L775.2 655.4 L778.8 655.3 L782.3 656.4 L785.9 655.9 L789.5 656.3 L793.1 656.7 L795.3 659.7 L796.6 663.2 L798.1 666.6 L801.6 667.1 L805.1 667.6 L808.6 667.7 L812.0 668.6 L815.5 669.1" fill="none" stroke="#e4b0b6" stroke-width="1.4"/>
<path d="M820.5 1029.8 L819.8 1034.9 L818.0 1039.7 L817.8 1043.7 L817.5 1047.7 L816.6 1051.7 L816.5 1055.7 L815.5 1059.6 L819.1 1060.7 L822.2 1062.7 L825.6 1064.3 L828.7 1066.3 L832.1 1067.9 L835.4 1069.5 L838.1 1072.2 L841.1 1074.6 L843.9 1077.1 L846.7 1079.8 L850.0 1081.8 L852.8 1084.4 L856.6 1085.9 L860.0 1088.2 L864.1 1089.0 L867.6 1091.2 L871.3 1092.8 L875.1 1094.3 L878.7 1094.3 L882.0 1095.7 L885.5 1096.3 L889.0 1096.5 L892.5 1097.1 L895.9 1097.7 L899.5 1097.4 L902.9 1098.3 L906.4 1098.8 L909.9 1099.3 L912.7 1101.6 L915.7 1103.6 L918.6 1105.6 L921.8 1107.4 L924.8 1109.3 L928.4 1111.0 L932.2 1112.0 L935.9 1113.2 L939.8 1113.9 L943.6 1114.9 L947.2 1116.7 L951.2 1117.0 L955.0 1118.0 L959.0 1118.4 L962.7 1120.0 L966.7 1120.3 L970.6 1121.1 L974.5 1121.7 L978.0 1122.2 L981.6 1122.6 L985.2 1122.8 L988.8 1122.5 L992.3 1123.8 L995.8 1124.1 L999.4 1124.2 L1000.4 1120.7 L1001.4 1117.3 L1002.5 1113.8 L1002.8 1110.1 L1004.3 1106.8 L1004.6 1102.5 L1004.0 1098.1 L1003.8 1093.8 L1004.3 1089.4" fill="none" stroke="#e4b0b6" stroke-width="1.4"/>
<path d="M1016.7 1104.3 L1020.5 1105.0 L1024.1 1106.4 L1028.0 1106.7 L1031.6 1108.3 L1035.3 1109.5 L1039.1 1109.8 L1042.9 1110.6 L1046.6 1111.7 L1050.3 1111.7 L1054.0 1112.0 L1057.7 1112.1 L1061.4 1112.0 L1065.2 1112.0 L1068.9 1111.4 L1072.6 1111.5 L1076.3 1111.7 L1080.0 1112.0 L1084.0 1112.1 L1088.0 1111.4 L1092.0 1111.5 L1096.0 1110.6 L1100.0 1111.0" fill="none" stroke="#e4b0b6" stroke-width="1.4"/>
<path d="M1004.3 1119.2 L1004.3 1123.2 L1003.6 1127.2 L1002.6 1131.1 L1002.1 1135.1 L1001.8 1139.1 L1004.9 1141.5 L1008.3 1143.3 L1011.3 1145.7 L1014.5 1147.8 L1017.7 1150.0 L1014.7 1152.8 L1011.9 1155.8 L1008.2 1157.9 L1005.7 1161.2 L1002.4 1163.7 L1003.6 1167.4 L1005.3 1170.7 L1008.0 1173.6 L1009.2 1177.3 L1010.6 1180.9 L1012.6 1184.1 L1013.0 1187.7 L1014.6 1190.9 L1015.8 1194.3 L1016.9 1197.7 L1017.0 1201.3 L1018.8 1204.5 L1019.5 1208.0 L1019.7 1211.6 L1020.6 1215.1 L1020.5 1218.8 L1020.3 1222.4 L1021.6 1225.9 L1021.2 1229.6 L1021.9 1233.1 L1021.8 1236.8 L1022.3 1240.3 L1022.9 1243.9" fill="none" stroke="#e4b0b6" stroke-width="1.4"/>
<path d="M1041.6 1153.4 L1045.1 1153.4 L1048.5 1154.5 L1052.1 1154.4 L1055.6 1154.1 L1059.1 1154.4 L1062.5 1155.4 L1066.0 1155.6 L1069.5 1155.8 L1073.1 1155.9 L1076.5 1156.5 L1080.0 1157.0 L1083.9 1157.7 L1087.7 1159.2 L1091.8 1159.1 L1095.5 1160.9 L1099.4 1161.9 L1103.4 1162.4 L1102.0 1165.8 L1099.4 1168.4 L1097.8 1171.7 L1096.2 1175.0 L1094.0 1178.4 L1092.8 1182.3 L1090.8 1185.8 L1087.2 1185.4 L1083.6 1184.7 L1080.0 1184.0 L1075.8 1184.1 L1074.1 1187.3 L1073.4 1190.9 L1072.4 1194.4 L1073.8 1198.2 L1075.0 1202.0 L1076.5 1205.8 L1077.5 1209.7 L1079.5 1206.3 L1081.9 1203.3 L1085.0 1200.8 L1086.8 1197.3 L1089.4 1194.4 L1093.0 1193.3 L1096.2 1191.2 L1097.5 1195.0 L1098.4 1198.9 L1099.1 1202.8 L1100.5 1206.6 L1101.3 1210.5 L1101.6 1214.6 L1103.1 1218.3 L1103.5 1222.6 L1104.4 1226.9 L1105.5 1231.1 L1106.5 1235.3 L1104.3 1238.5 L1102.6 1241.9 L1101.3 1245.5 L1099.4 1248.8 L1098.4 1252.6 L1096.2 1255.8 L1098.6 1259.1 L1101.4 1262.0 L1103.7 1265.4 L1106.3 1268.4 L1109.2 1271.3 L1111.6 1274.6" fill="none" stroke="#e4b0b6" stroke-width="1.4"/>
<path d="M1209.4 1106.7 L1206.6 1104.0 L1205.0 1100.4 L1202.2 1097.7 L1199.2 1099.9 L1195.7 1101.3 L1192.5 1103.3 L1189.3 1105.1 L1185.7 1106.4 L1182.3 1108.0 L1179.5 1110.6 L1176.0 1111.9 L1172.9 1114.1 L1169.5 1115.6 L1166.3 1117.5 L1165.7 1121.1 L1165.3 1124.8 L1164.5 1128.4 L1163.8 1132.0 L1162.7 1135.5 L1160.5 1138.6 L1159.1 1142.1 L1157.6 1145.6 L1155.1 1148.5 L1153.2 1151.7 L1151.9 1155.3 L1151.0 1158.9 L1150.3 1162.6 L1149.3 1166.2 L1148.4 1169.8 L1147.1 1173.3 L1146.4 1177.0 L1145.2 1180.5 L1144.2 1184.1 L1142.9 1187.6 L1139.0 1186.8 L1135.1 1185.7 L1131.1 1185.1 L1127.0 1184.8 L1123.1 1184.0 L1122.5 1187.8 L1121.7 1191.6 L1121.2 1195.5 L1120.6 1199.3 L1120.2 1203.2 L1119.3 1207.0 L1117.8 1210.7 L1117.7 1214.6 L1116.6 1218.4 L1114.6 1221.8 L1113.0 1225.3 L1111.2 1228.8 L1110.4 1232.7 L1108.8 1236.2 L1107.0 1239.7 L1105.0 1243.0 L1102.6 1246.1 L1100.3 1249.2 L1098.0 1252.3" fill="none" stroke="#e4b0b6" stroke-width="1.4"/>
<path d="M1227.4 1293.6 L1231.2 1292.7 L1234.7 1291.2 L1238.3 1289.8 L1241.5 1287.5 L1245.1 1286.1 L1249.0 1285.4 L1252.7 1284.2 L1256.1 1282.4 L1259.7 1281.0 L1263.3 1280.0 L1266.7 1278.3 L1270.5 1277.7 L1274.2 1277.3 L1277.7 1275.7 L1280.2 1272.3 L1282.4 1268.7 L1284.7 1265.2 L1286.1 1261.1 L1288.5 1257.7 L1291.1 1255.1 L1294.0 1252.9 L1297.1 1251.0 L1300.0 1248.7" fill="none" stroke="#e4b0b6" stroke-width="1.4"/>
<path d="M1283.1 1275.7 L1284.2 1279.8 L1285.3 1283.9 L1286.9 1287.9 L1288.5 1291.8 L1292.2 1294.3 L1296.0 1296.9 L1300.0 1299.0" fill="none" stroke="#e4b0b6" stroke-width="1.4"/>
<path d="M1301.9 1250.3 L1300.5 1253.6 L1298.9 1256.9 L1298.0 1260.5 L1295.7 1263.5 L1294.8 1267.1 L1292.6 1270.1 L1291.6 1273.6 L1289.4 1277.1 L1287.6 1281.0 L1285.7 1284.7 L1283.5 1288.2 L1281.2 1291.7 L1277.6 1291.8 L1273.9 1292.0 L1270.4 1292.9 L1266.8 1293.3 L1263.1 1293.0 L1259.5 1293.2 L1255.9 1293.7 L1252.3 1294.1 L1248.6 1293.9 L1245.0 1294.3 L1240.9 1295.4 L1236.7 1295.6 L1232.6 1295.9 L1228.4 1295.8 L1224.3 1296.9" fill="none" stroke="#e4b0b6" stroke-width="1.4"/>
<path d="M1322.6 1247.7 L1326.0 1250.0 L1329.3 1252.4 L1333.0 1254.1 L1336.6 1256.0 L1340.0 1258.2 L1343.3 1260.6 L1346.8 1262.2 L1350.5 1262.9 L1354.3 1263.5 L1358.0 1264.2 L1361.5 1265.8 L1364.4 1268.1 L1367.2 1270.5 L1370.3 1272.5 L1373.3 1274.6 L1375.9 1277.3 L1378.6 1279.8 L1382.0 1281.4 L1384.7 1283.9 L1386.0 1287.5 L1386.4 1291.3 L1387.1 1295.0 L1387.5 1298.7 L1388.8 1302.3 L1388.9 1306.2 L1390.0 1309.8" fill="none" stroke="#e4b0b6" stroke-width="1.4"/>
<path d="M730.0 712.4 L733.6 711.7 L736.9 710.2 L740.2 708.5 L744.1 708.7 L747.2 706.4 L750.9 706.2 L754.0 704.0 L757.5 702.9 L761.2 702.7 L764.4 700.8 L768.0 700.0 L772.2 700.0 L776.0 698.4 L779.9 697.0 L783.9 696.3 L788.0 696.0 L791.0 694.0 L794.3 692.5 L797.6 691.0 L799.9 687.9 L803.2 686.4 L806.1 684.2 L809.8 683.5 L812.1 680.3 L815.5 679.0 L815.3 675.2 L816.0 671.4 L817.2 667.8 L818.7 664.3 L819.3 660.5 L819.2 656.7 L822.3 653.9 L825.5 651.1 L828.2 647.9 L830.4 644.3 L828.3 640.7 L826.2 637.1 L825.6 632.8 L823.0 629.4 L823.1 625.8 L821.4 622.4 L822.2 618.7 L821.4 615.2 L821.0 611.6 L820.6 608.1 L820.5 604.5 L817.5 601.4 L814.8 598.2 L812.7 594.5 L810.5 590.8 L813.0 584.6 L816.3 583.3 L820.0 583.4 L823.0 580.9 L826.8 581.4 L829.8 579.0 L833.3 578.3 L836.9 578.1 L840.3 577.1 L843.5 575.4 L846.7 573.7 L850.3 573.5 L853.8 574.1 L857.4 574.5 L860.7 576.1 L864.5 575.4 L867.9 576.3 L871.4 577.2 L870.4 572.8 L867.3 569.2 L866.4 564.8 L867.3 561.0 L869.1 557.5 L870.1 553.8 L870.0 549.7 L871.0 545.9 L872.2 542.2 L874.7 538.9 L875.1 535.0 L875.8 531.3 L877.7 528.0 L879.0 524.5 L879.1 520.7 L880.1 517.1 L882.3 513.9 L882.6 510.1 L886.7 511.9 L891.0 513.0 L895.0 515.0 L898.4 516.0 L902.0 515.9 L905.5 516.5 L909.1 516.6 L912.3 518.6 L915.7 519.5 L919.3 519.6 L922.7 520.8 L926.5 519.8 L929.8 521.3 L933.0 518.7 L936.6 516.9 L940.5 515.5 L943.5 512.6 L944.2 509.0 L943.0 505.4 L942.6 501.9 L942.8 498.2 L942.8 494.7 L943.4 491.0 L941.9 487.5 L942.9 483.9 L942.2 480.3 L944.3 476.3 L946.1 472.3 L947.2 467.9 L951.3 467.4 L955.2 466.1 L959.0 464.6 L963.0 463.6 L967.0 462.9 L967.7 459.1 L969.4 455.6 L969.1 451.5 L970.8 448.0 L974.5 445.5 L978.5 444.7 L982.6 445.4 L986.6 444.1 L990.7 444.3 L993.2 447.0 L994.4 450.5 L997.5 452.4 L999.3 455.5 L1002.1 457.7 L1003.7 461.0 L1006.4 463.4 L1008.7 466.0 L1012.1 467.5 L1014.3 470.3 L1017.9 471.4 L1021.1 473.1 L1024.0 475.5 L1027.0 477.6 L1030.5 478.9 L1033.9 480.3 L1037.0 482.3 L1040.0 484.4 L1043.2 486.2 L1046.6 487.7 L1048.7 491.1 L1051.1 494.2 L1053.8 497.1 L1056.5 500.0 L1058.9 503.3 L1059.5 507.4 L1062.2 510.5 L1063.5 514.3 L1065.6 517.8 L1066.8 521.6 L1069.0 525.0 L1069.2 528.8 L1068.8 532.5 L1068.5 536.2 L1068.3 540.0 L1066.7 543.6 L1066.9 547.3 L1067.0 551.1 L1066.4 554.8 L1065.6 558.3 L1063.6 561.5 L1063.4 565.2 L1062.9 568.9 L1061.5 572.2 L1063.5 576.3 L1066.4 579.7 L1070.1 580.4 L1073.8 581.4 L1077.7 580.2 L1081.3 581.3 L1085.0 582.3 L1088.7 582.8 L1092.5 583.3 L1096.4 582.2 L1100.0 583.4 L1103.6 583.3 L1107.2 583.2 L1110.7 583.6 L1114.2 585.3 L1117.8 584.8 L1121.3 585.7 L1124.9 585.2 L1128.3 586.7 L1131.2 589.1 L1134.9 590.1 L1138.4 591.5 L1141.3 594.0 L1144.8 595.2 L1147.6 597.7 L1151.6 598.2 L1154.4 600.7 L1157.6 602.5 L1161.1 603.7 L1164.2 605.7 L1167.3 607.7 L1169.5 610.7 L1171.0 614.1 L1172.2 617.6 L1174.0 620.6 L1174.9 624.1 L1176.2 627.3 L1178.4 630.2 L1180.1 633.2 L1181.1 636.7 L1182.2 640.0 L1184.0 643.1 L1186.8 645.5 L1188.7 648.6 L1191.0 651.4 L1192.2 654.9 L1194.7 657.5 L1199.1 657.3 L1203.3 656.1 L1207.7 655.8 L1212.1 656.2 L1215.9 656.5 L1219.6 657.3 L1223.3 657.9 L1227.2 657.5 L1230.9 658.1 L1234.5 659.5 L1238.3 659.5 L1242.1 659.8 L1245.8 660.4 L1249.5 661.2 L1253.2 662.0 L1257.0 660.9 L1260.7 661.3 L1264.4 660.9 L1268.2 661.0 L1271.9 661.9 L1275.6 662.1 L1279.3 661.0 L1283.1 660.7 L1286.8 661.2 L1290.4 662.0 L1294.1 661.5 L1297.7 661.6 L1301.1 663.6 L1304.8 663.2 L1308.3 664.3 L1312.0 664.0 L1315.5 665.3 L1319.2 665.0 L1322.2 666.9 L1325.5 668.5 L1328.7 670.2 L1331.1 673.0 L1334.2 674.9 L1337.4 676.4 L1340.6 678.1 L1344.4 678.0 L1347.4 680.1 L1350.9 680.9 L1354.1 682.4 L1357.8 682.9 L1361.7 682.7 L1365.4 683.4 L1369.0 684.3 L1372.7 685.5 L1376.6 684.5 L1380.3 685.6 L1384.0 686.1 L1387.0 688.7 L1390.2 691.0 L1394.0 692.4 L1397.2 689.9 L1400.6 687.8 L1404.8 687.1 L1408.3 685.1 L1411.4 682.4 L1414.6 681.0 L1417.6 678.9 L1421.4 679.0 L1424.3 676.7 L1427.9 676.2 L1430.9 674.4 L1434.3 673.3 L1437.1 670.9 L1440.8 670.5 L1443.8 668.7 L1447.3 668.0 L1450.9 668.1 L1454.4 668.7 L1458.0 668.4 L1461.4 667.0 L1465.0 667.4 L1468.5 666.7 L1472.0 667.0 L1472.2 670.5 L1472.0 674.0 L1472.2 677.5 L1472.7 681.0 L1472.5 684.5 L1471.6 688.0 L1471.3 691.5 L1472.8 695.0 L1471.9 698.5 L1471.5 702.0 L1472.8 705.5 L1471.4 709.0 L1472.7 712.5 L1471.8 716.0 L1471.9 719.5 L1471.8 723.0 L1472.3 726.5 L1472.1 730.0 L1471.9 733.5 L1472.1 737.0 L1471.7 740.5 L1472.1 744.0 L1472.1 747.5 L1472.9 751.0 L1471.8 754.5 L1472.0 758.0 L1472.5 761.5 L1471.5 765.0 L1471.5 768.5 L1472.1 772.0 L1472.6 775.5 L1472.0 779.0 L1472.7 782.5 L1472.7 786.0 L1472.1 789.5 L1472.7 793.0 L1472.1 796.5 L1472.0 800.0 L1472.8 803.5 L1471.8 807.0 L1472.8 810.5 L1471.6 814.0 L1471.5 817.5 L1472.0 821.0 L1472.8 824.5 L1472.0 828.0 L1472.2 831.5 L1471.2 835.0 L1472.7 838.5 L1471.4 842.0 L1471.1 845.5 L1471.6 849.0 L1471.4 852.5 L1472.6 856.0 L1471.1 859.5 L1472.0 863.0 L1471.2 866.5 L1471.3 870.0 L1472.6 873.5 L1471.5 877.0 L1471.2 880.5 L1472.8 884.0 L1472.3 887.5 L1471.5 891.0 L1472.6 894.5 L1471.3 898.0 L1472.4 901.5 L1471.4 905.0 L1472.6 908.5 L1472.0 912.0 L1471.2 915.5 L1472.5 919.0 L1472.4 922.5 L1472.0 926.0 L1472.3 929.5 L1472.8 933.0 L1472.6 936.5 L1472.6 940.0 L1471.2 943.5 L1471.7 947.0 L1471.3 950.5 L1472.6 954.0 L1471.5 957.5 L1472.7 961.0 L1471.9 964.5 L1471.8 968.0 L1472.3 971.5 L1471.3 975.0 L1471.9 978.5 L1471.9 982.0 L1471.3 985.5 L1472.7 989.0 L1471.1 992.5 L1471.8 996.0 L1472.2 999.5 L1471.5 1003.0 L1472.4 1006.5 L1471.1 1010.0 L1471.9 1013.5 L1472.3 1017.0 L1471.5 1020.5 L1472.1 1024.0 L1472.6 1027.5 L1471.6 1031.0 L1472.8 1034.5 L1471.4 1038.0 L1472.4 1041.5 L1471.7 1045.0 L1471.1 1048.5 L1471.8 1052.0 L1471.7 1055.5 L1472.3 1059.0 L1472.9 1062.5 L1472.8 1066.0 L1472.6 1069.5 L1471.8 1073.0 L1472.1 1076.5 L1472.0 1080.0 L1471.3 1083.5 L1472.7 1087.0 L1472.5 1090.5 L1471.7 1094.0 L1472.9 1097.5 L1472.9 1101.0 L1472.3 1104.5 L1472.7 1108.0 L1472.3 1111.5 L1472.5 1115.0 L1471.8 1118.5 L1471.8 1122.0 L1472.5 1125.5 L1471.8 1129.0 L1472.0 1132.5 L1472.7 1136.0 L1471.2 1139.5 L1472.5 1143.0 L1472.6 1146.5 L1472.7 1150.0 L1471.8 1153.5 L1471.3 1157.0 L1471.5 1160.5 L1472.2 1164.0 L1472.4 1167.5 L1472.9 1171.0 L1471.7 1174.5 L1471.9 1178.0 L1472.3 1181.5 L1471.7 1185.0 L1472.1 1188.5 L1471.2 1192.0 L1471.6 1195.5 L1472.5 1199.0 L1471.3 1202.5 L1472.8 1206.0 L1471.9 1209.5 L1472.2 1213.0 L1472.5 1216.5 L1472.8 1220.0 L1471.5 1223.5 L1472.9 1227.0 L1471.9 1230.5 L1471.2 1234.0 L1472.6 1237.5 L1472.5 1241.0 L1471.8 1244.5 L1472.0 1248.0 L1468.1 1247.5 L1464.2 1246.9 L1460.3 1246.1 L1456.3 1246.8 L1452.4 1245.8 L1449.2 1244.2 L1446.1 1242.3 L1442.8 1240.8 L1440.6 1237.6 L1437.2 1236.3 L1436.9 1232.4 L1436.1 1228.6 L1434.0 1225.0 L1434.8 1220.9 L1433.4 1217.2 L1429.7 1215.3 L1425.7 1214.2 L1422.1 1212.2 L1418.1 1211.2 L1414.3 1209.6 L1410.3 1208.1 L1406.4 1206.4 L1402.9 1203.9 L1399.2 1205.6 L1395.5 1207.2 L1391.5 1208.0 L1387.5 1208.5 L1383.7 1209.9 L1380.0 1211.5 L1376.0 1211.8 L1372.3 1213.0 L1368.7 1214.8 L1364.8 1215.2 L1361.0 1216.4 L1357.2 1217.2 L1353.3 1217.0 L1349.6 1217.8 L1345.8 1218.6 L1341.9 1218.2 L1338.0 1217.9 L1334.3 1219.1 L1330.7 1221.1 L1326.4 1221.5 L1323.2 1224.5 L1319.2 1225.6 L1315.2 1226.7 L1313.0 1229.9 L1309.8 1232.1 L1307.0 1234.8 L1304.7 1237.9 L1302.8 1241.2 L1300.0 1243.9 L1296.5 1241.4 L1292.3 1240.5 L1288.5 1238.8 L1285.3 1235.9 L1281.2 1234.7 L1279.2 1231.3 L1277.1 1227.9 L1274.8 1224.6 L1273.1 1221.0 L1270.1 1218.2 L1268.4 1214.5 L1265.7 1211.5 L1262.4 1209.4 L1259.1 1207.5 L1255.3 1206.3 L1253.5 1202.9 L1252.2 1199.2 L1250.3 1195.9 L1248.1 1192.7 L1246.3 1189.3 L1245.0 1185.6 L1241.1 1184.9 L1237.1 1185.5 L1233.4 1183.6 L1229.4 1184.5 L1225.5 1184.3 L1221.7 1183.0 L1221.7 1179.2 L1223.9 1175.7 L1223.6 1171.8 L1224.0 1168.1 L1224.5 1164.3 L1225.3 1160.6 L1226.8 1157.1 L1229.1 1154.4 L1231.0 1151.5 L1233.2 1148.7 L1235.2 1145.8 L1236.3 1142.3 L1239.1 1139.9 L1240.8 1136.8 L1243.4 1134.4 L1245.0 1131.2 L1246.0 1127.6 L1246.5 1124.0 L1245.4 1120.3 L1247.2 1116.8 L1247.6 1113.2 L1248.1 1109.6 L1247.0 1105.8 L1247.5 1102.2 L1247.7 1098.5 L1248.8 1095.0 L1245.8 1093.0 L1244.5 1089.4 L1242.1 1086.8 L1239.5 1084.4 L1237.4 1081.6 L1234.6 1079.4 L1230.8 1077.3 L1226.7 1075.9 L1222.7 1074.3 L1219.1 1071.7 L1217.1 1075.4 L1213.5 1077.9 L1211.7 1081.7 L1208.7 1084.6 L1204.7 1082.9 L1200.9 1080.8 L1196.7 1079.5 L1193.2 1076.8 L1189.1 1077.2 L1184.9 1077.2 L1180.8 1076.4 L1176.6 1077.0 L1172.5 1076.8 L1169.3 1078.6 L1165.5 1079.0 L1162.5 1081.3 L1158.9 1082.2 L1155.8 1084.0 L1152.9 1086.5 L1149.3 1087.3 L1145.9 1088.8 L1142.3 1089.7 L1139.3 1091.9 L1135.7 1092.8 L1132.5 1094.6 L1129.4 1096.6 L1125.9 1097.6 L1122.0 1097.9 L1118.7 1100.2 L1114.7 1099.9 L1111.2 1102.0 L1107.6 1103.3 L1103.8 1103.9 L1100.0 1104.3 L1097.2 1101.4 L1093.8 1099.3 L1091.9 1096.2 L1088.2 1095.0 L1086.3 1091.9 L1083.9 1089.4 L1081.8 1086.5 L1078.9 1084.4 L1074.8 1084.0 L1070.9 1082.4 L1066.9 1081.7 L1063.1 1079.8 L1059.0 1079.4 L1055.0 1079.3 L1051.1 1077.6 L1047.0 1078.3 L1043.0 1078.0 L1039.1 1077.0 L1035.8 1078.5 L1032.9 1080.7 L1030.2 1083.2 L1026.7 1084.4 L1024.6 1088.0 L1023.6 1092.2 L1020.6 1095.3 L1019.2 1099.3 L1018.9 1095.5 L1018.5 1091.8 L1017.6 1088.1 L1016.7 1084.4 L1012.5 1083.8 L1008.4 1082.9 L1004.3 1081.9 L1000.4 1082.8 L996.2 1082.7 L992.5 1084.9 L988.2 1084.3 L984.4 1085.7 L980.7 1086.0 L977.2 1085.1 L973.7 1084.5 L970.3 1082.8 L966.7 1083.0 L963.1 1082.7 L959.6 1081.9 L956.3 1080.3 L952.5 1080.4 L949.1 1079.0 L945.7 1077.9 L942.2 1077.0 L940.0 1074.2 L937.6 1071.7 L934.9 1069.3 L932.1 1067.2 L929.8 1064.5 L926.3 1063.1 L922.9 1061.8 L920.1 1059.0 L916.7 1057.6 L913.4 1055.9 L909.9 1054.6 L906.3 1053.5 L903.3 1051.4 L900.0 1049.6 L896.7 1047.4 L892.9 1045.9 L889.0 1044.9 L885.7 1042.6 L882.5 1040.1 L878.4 1039.4 L875.1 1037.2 L872.2 1035.1 L869.9 1032.5 L867.9 1029.5 L865.6 1026.8 L862.2 1025.2 L860.2 1022.3 L855.7 1021.4 L851.5 1019.8 L847.3 1017.9 L845.8 1021.5 L843.8 1024.8 L842.1 1028.3 L837.0 1025.7 L833.2 1024.1 L829.9 1021.6 L826.6 1019.2 L823.1 1018.1 L820.5 1015.2 L817.1 1014.0 L813.7 1012.7 L809.3 1010.1 L805.9 1006.3 L801.8 1004.2 L797.1 1004.4 L793.0 1002.4 L790.2 999.5 L788.5 995.8 L785.2 993.3 L785.1 989.0 L784.3 984.8 L783.1 980.7 L782.6 976.5 L780.5 973.4 L779.7 969.7 L777.3 966.7 L775.9 963.3 L774.8 959.7 L778.7 958.4 L783.9 958.4 L787.3 960.8 L790.4 963.5 L791.3 959.7 L793.6 956.6 L795.5 953.2 L794.7 949.2 L793.3 945.3 L791.7 941.6 L790.4 937.7 L788.0 934.1 L785.1 930.8 L782.6 927.3 L781.5 923.5 L781.9 919.5 L781.3 915.7 L784.5 913.6 L787.8 911.8 L785.2 906.6 L781.9 904.9 L778.5 903.3 L774.8 902.7 L772.1 898.3 L769.7 893.7 L768.9 889.4 L768.2 885.1 L766.6 881.1 L765.8 876.8 L762.2 876.9 L758.7 875.6 L755.1 874.9 L751.5 874.7 L747.9 874.5 L744.4 873.8 L740.8 873.7 L737.2 873.4 L733.6 873.4 L730.0 872.9 L729.7 869.3 L730.2 865.8 L729.3 862.2 L729.9 858.6 L730.5 855.1 L730.4 851.5 L730.2 847.9 L729.6 844.4 L729.9 840.8 L729.9 837.2 L730.2 833.7 L729.8 830.1 L730.3 826.5 L730.8 823.0 L729.4 819.4 L730.3 815.8 L730.5 812.3 L729.8 808.7 L730.0 805.1 L730.9 801.6 L729.2 798.0 L730.1 794.4 L729.4 790.9 L730.5 787.3 L730.8 783.7 L730.0 780.2 L729.3 776.6 L730.1 773.0 L730.1 769.5 L730.4 765.9 L730.0 762.3 L730.3 758.8 L730.6 755.2 L730.0 751.6 L729.8 748.1 L730.8 744.5 L729.5 740.9 L730.3 737.4 L729.8 733.8 L730.5 730.2 L729.3 726.7 L730.9 723.1 L729.7 719.5 L729.2 716.0 L730.0 712.4 Z" fill="#b2c4f4" stroke="#fff" stroke-width="2.4"/>
<path d="M730.0 712.4 L733.6 711.7 L736.9 710.2 L740.2 708.5 L744.1 708.7 L747.2 706.4 L750.9 706.2 L754.0 704.0 L757.5 702.9 L761.2 702.7 L764.4 700.8 L768.0 700.0 L772.2 700.0 L776.0 698.4 L779.9 697.0 L783.9 696.3 L788.0 696.0 L791.0 694.0 L794.3 692.5 L797.6 691.0 L799.9 687.9 L803.2 686.4 L806.1 684.2 L809.8 683.5 L812.1 680.3 L815.5 679.0 L815.3 675.2 L816.0 671.4 L817.2 667.8 L818.7 664.3 L819.3 660.5 L819.2 656.7 L822.3 653.9 L825.5 651.1 L828.2 647.9 L830.4 644.3 L828.3 640.7 L826.2 637.1 L825.6 632.8 L823.0 629.4 L823.1 625.8 L821.4 622.4 L822.2 618.7 L821.4 615.2 L821.0 611.6 L820.6 608.1 L820.5 604.5 L817.5 601.4 L814.8 598.2 L812.7 594.5 L810.5 590.8 L813.0 584.6 L816.3 583.3 L820.0 583.4 L823.0 580.9 L826.8 581.4 L829.8 579.0 L833.3 578.3 L836.9 578.1 L840.3 577.1 L843.5 575.4 L846.7 573.7 L850.3 573.5 L853.8 574.1 L857.4 574.5 L860.7 576.1 L864.5 575.4 L867.9 576.3 L871.4 577.2 L870.4 572.8 L867.3 569.2 L866.4 564.8 L867.3 561.0 L869.1 557.5 L870.1 553.8 L870.0 549.7 L871.0 545.9 L872.2 542.2 L874.7 538.9 L875.1 535.0 L875.8 531.3 L877.7 528.0 L879.0 524.5 L879.1 520.7 L880.1 517.1 L882.3 513.9 L882.6 510.1 L886.7 511.9 L891.0 513.0 L895.0 515.0 L898.4 516.0 L902.0 515.9 L905.5 516.5 L909.1 516.6 L912.3 518.6 L915.7 519.5 L919.3 519.6 L922.7 520.8 L926.5 519.8 L929.8 521.3 L933.0 518.7 L936.6 516.9 L940.5 515.5 L943.5 512.6 L944.2 509.0 L943.0 505.4 L942.6 501.9 L942.8 498.2 L942.8 494.7 L943.4 491.0 L941.9 487.5 L942.9 483.9 L942.2 480.3 L944.3 476.3 L946.1 472.3 L947.2 467.9 L951.3 467.4 L955.2 466.1 L959.0 464.6 L963.0 463.6 L967.0 462.9 L967.7 459.1 L969.4 455.6 L969.1 451.5 L970.8 448.0 L974.5 445.5 L978.5 444.7 L982.6 445.4 L986.6 444.1 L990.7 444.3 L993.2 447.0 L994.4 450.5 L997.5 452.4 L999.3 455.5 L1002.1 457.7 L1003.7 461.0 L1006.4 463.4 L1008.7 466.0 L1012.1 467.5 L1014.3 470.3 L1017.9 471.4 L1021.1 473.1 L1024.0 475.5 L1027.0 477.6 L1030.5 478.9 L1033.9 480.3 L1037.0 482.3 L1040.0 484.4 L1043.2 486.2 L1046.6 487.7 L1048.7 491.1 L1051.1 494.2 L1053.8 497.1 L1056.5 500.0 L1058.9 503.3 L1059.5 507.4 L1062.2 510.5 L1063.5 514.3 L1065.6 517.8 L1066.8 521.6 L1069.0 525.0 L1069.2 528.8 L1068.8 532.5 L1068.5 536.2 L1068.3 540.0 L1066.7 543.6 L1066.9 547.3 L1067.0 551.1 L1066.4 554.8 L1065.6 558.3 L1063.6 561.5 L1063.4 565.2 L1062.9 568.9 L1061.5 572.2 L1063.5 576.3 L1066.4 579.7 L1070.1 580.4 L1073.8 581.4 L1077.7 580.2 L1081.3 581.3 L1085.0 582.3 L1088.7 582.8 L1092.5 583.3 L1096.4 582.2 L1100.0 583.4 L1103.6 583.3 L1107.2 583.2 L1110.7 583.6 L1114.2 585.3 L1117.8 584.8 L1121.3 585.7 L1124.9 585.2 L1128.3 586.7 L1131.2 589.1 L1134.9 590.1 L1138.4 591.5 L1141.3 594.0 L1144.8 595.2 L1147.6 597.7 L1151.6 598.2 L1154.4 600.7 L1157.6 602.5 L1161.1 603.7 L1164.2 605.7 L1167.3 607.7 L1169.5 610.7 L1171.0 614.1 L1172.2 617.6 L1174.0 620.6 L1174.9 624.1 L1176.2 627.3 L1178.4 630.2 L1180.1 633.2 L1181.1 636.7 L1182.2 640.0 L1184.0 643.1 L1186.8 645.5 L1188.7 648.6 L1191.0 651.4 L1192.2 654.9 L1194.7 657.5 L1199.1 657.3 L1203.3 656.1 L1207.7 655.8 L1212.1 656.2 L1215.9 656.5 L1219.6 657.3 L1223.3 657.9 L1227.2 657.5 L1230.9 658.1 L1234.5 659.5 L1238.3 659.5 L1242.1 659.8 L1245.8 660.4 L1249.5 661.2 L1253.2 662.0 L1257.0 660.9 L1260.7 661.3 L1264.4 660.9 L1268.2 661.0 L1271.9 661.9 L1275.6 662.1 L1279.3 661.0 L1283.1 660.7 L1286.8 661.2 L1290.4 662.0 L1294.1 661.5 L1297.7 661.6 L1301.1 663.6 L1304.8 663.2 L1308.3 664.3 L1312.0 664.0 L1315.5 665.3 L1319.2 665.0 L1322.2 666.9 L1325.5 668.5 L1328.7 670.2 L1331.1 673.0 L1334.2 674.9 L1337.4 676.4 L1340.6 678.1 L1344.4 678.0 L1347.4 680.1 L1350.9 680.9 L1354.1 682.4 L1357.8 682.9 L1361.7 682.7 L1365.4 683.4 L1369.0 684.3 L1372.7 685.5 L1376.6 684.5 L1380.3 685.6 L1384.0 686.1 L1387.0 688.7 L1390.2 691.0 L1394.0 692.4 L1397.2 689.9 L1400.6 687.8 L1404.8 687.1 L1408.3 685.1 L1411.4 682.4 L1414.6 681.0 L1417.6 678.9 L1421.4 679.0 L1424.3 676.7 L1427.9 676.2 L1430.9 674.4 L1434.3 673.3 L1437.1 670.9 L1440.8 670.5 L1443.8 668.7 L1447.3 668.0 L1450.9 668.1 L1454.4 668.7 L1458.0 668.4 L1461.4 667.0 L1465.0 667.4 L1468.5 666.7 L1472.0 667.0 L1472.2 670.5 L1472.0 674.0 L1472.2 677.5 L1472.7 681.0 L1472.5 684.5 L1471.6 688.0 L1471.3 691.5 L1472.8 695.0 L1471.9 698.5 L1471.5 702.0 L1472.8 705.5 L1471.4 709.0 L1472.7 712.5 L1471.8 716.0 L1471.9 719.5 L1471.8 723.0 L1472.3 726.5 L1472.1 730.0 L1471.9 733.5 L1472.1 737.0 L1471.7 740.5 L1472.1 744.0 L1472.1 747.5 L1472.9 751.0 L1471.8 754.5 L1472.0 758.0 L1472.5 761.5 L1471.5 765.0 L1471.5 768.5 L1472.1 772.0 L1472.6 775.5 L1472.0 779.0 L1472.7 782.5 L1472.7 786.0 L1472.1 789.5 L1472.7 793.0 L1472.1 796.5 L1472.0 800.0 L1472.8 803.5 L1471.8 807.0 L1472.8 810.5 L1471.6 814.0 L1471.5 817.5 L1472.0 821.0 L1472.8 824.5 L1472.0 828.0 L1472.2 831.5 L1471.2 835.0 L1472.7 838.5 L1471.4 842.0 L1471.1 845.5 L1471.6 849.0 L1471.4 852.5 L1472.6 856.0 L1471.1 859.5 L1472.0 863.0 L1471.2 866.5 L1471.3 870.0 L1472.6 873.5 L1471.5 877.0 L1471.2 880.5 L1472.8 884.0 L1472.3 887.5 L1471.5 891.0 L1472.6 894.5 L1471.3 898.0 L1472.4 901.5 L1471.4 905.0 L1472.6 908.5 L1472.0 912.0 L1471.2 915.5 L1472.5 919.0 L1472.4 922.5 L1472.0 926.0 L1472.3 929.5 L1472.8 933.0 L1472.6 936.5 L1472.6 940.0 L1471.2 943.5 L1471.7 947.0 L1471.3 950.5 L1472.6 954.0 L1471.5 957.5 L1472.7 961.0 L1471.9 964.5 L1471.8 968.0 L1472.3 971.5 L1471.3 975.0 L1471.9 978.5 L1471.9 982.0 L1471.3 985.5 L1472.7 989.0 L1471.1 992.5 L1471.8 996.0 L1472.2 999.5 L1471.5 1003.0 L1472.4 1006.5 L1471.1 1010.0 L1471.9 1013.5 L1472.3 1017.0 L1471.5 1020.5 L1472.1 1024.0 L1472.6 1027.5 L1471.6 1031.0 L1472.8 1034.5 L1471.4 1038.0 L1472.4 1041.5 L1471.7 1045.0 L1471.1 1048.5 L1471.8 1052.0 L1471.7 1055.5 L1472.3 1059.0 L1472.9 1062.5 L1472.8 1066.0 L1472.6 1069.5 L1471.8 1073.0 L1472.1 1076.5 L1472.0 1080.0 L1471.3 1083.5 L1472.7 1087.0 L1472.5 1090.5 L1471.7 1094.0 L1472.9 1097.5 L1472.9 1101.0 L1472.3 1104.5 L1472.7 1108.0 L1472.3 1111.5 L1472.5 1115.0 L1471.8 1118.5 L1471.8 1122.0 L1472.5 1125.5 L1471.8 1129.0 L1472.0 1132.5 L1472.7 1136.0 L1471.2 1139.5 L1472.5 1143.0 L1472.6 1146.5 L1472.7 1150.0 L1471.8 1153.5 L1471.3 1157.0 L1471.5 1160.5 L1472.2 1164.0 L1472.4 1167.5 L1472.9 1171.0 L1471.7 1174.5 L1471.9 1178.0 L1472.3 1181.5 L1471.7 1185.0 L1472.1 1188.5 L1471.2 1192.0 L1471.6 1195.5 L1472.5 1199.0 L1471.3 1202.5 L1472.8 1206.0 L1471.9 1209.5 L1472.2 1213.0 L1472.5 1216.5 L1472.8 1220.0 L1471.5 1223.5 L1472.9 1227.0 L1471.9 1230.5 L1471.2 1234.0 L1472.6 1237.5 L1472.5 1241.0 L1471.8 1244.5 L1472.0 1248.0 L1468.1 1247.5 L1464.2 1246.9 L1460.3 1246.1 L1456.3 1246.8 L1452.4 1245.8 L1449.2 1244.2 L1446.1 1242.3 L1442.8 1240.8 L1440.6 1237.6 L1437.2 1236.3 L1436.9 1232.4 L1436.1 1228.6 L1434.0 1225.0 L1434.8 1220.9 L1433.4 1217.2 L1429.7 1215.3 L1425.7 1214.2 L1422.1 1212.2 L1418.1 1211.2 L1414.3 1209.6 L1410.3 1208.1 L1406.4 1206.4 L1402.9 1203.9 L1399.2 1205.6 L1395.5 1207.2 L1391.5 1208.0 L1387.5 1208.5 L1383.7 1209.9 L1380.0 1211.5 L1376.0 1211.8 L1372.3 1213.0 L1368.7 1214.8 L1364.8 1215.2 L1361.0 1216.4 L1357.2 1217.2 L1353.3 1217.0 L1349.6 1217.8 L1345.8 1218.6 L1341.9 1218.2 L1338.0 1217.9 L1334.3 1219.1 L1330.7 1221.1 L1326.4 1221.5 L1323.2 1224.5 L1319.2 1225.6 L1315.2 1226.7 L1313.0 1229.9 L1309.8 1232.1 L1307.0 1234.8 L1304.7 1237.9 L1302.8 1241.2 L1300.0 1243.9 L1296.5 1241.4 L1292.3 1240.5 L1288.5 1238.8 L1285.3 1235.9 L1281.2 1234.7 L1279.2 1231.3 L1277.1 1227.9 L1274.8 1224.6 L1273.1 1221.0 L1270.1 1218.2 L1268.4 1214.5 L1265.7 1211.5 L1262.4 1209.4 L1259.1 1207.5 L1255.3 1206.3 L1253.5 1202.9 L1252.2 1199.2 L1250.3 1195.9 L1248.1 1192.7 L1246.3 1189.3 L1245.0 1185.6 L1241.1 1184.9 L1237.1 1185.5 L1233.4 1183.6 L1229.4 1184.5 L1225.5 1184.3 L1221.7 1183.0 L1221.7 1179.2 L1223.9 1175.7 L1223.6 1171.8 L1224.0 1168.1 L1224.5 1164.3 L1225.3 1160.6 L1226.8 1157.1 L1229.1 1154.4 L1231.0 1151.5 L1233.2 1148.7 L1235.2 1145.8 L1236.3 1142.3 L1239.1 1139.9 L1240.8 1136.8 L1243.4 1134.4 L1245.0 1131.2 L1246.0 1127.6 L1246.5 1124.0 L1245.4 1120.3 L1247.2 1116.8 L1247.6 1113.2 L1248.1 1109.6 L1247.0 1105.8 L1247.5 1102.2 L1247.7 1098.5 L1248.8 1095.0 L1245.8 1093.0 L1244.5 1089.4 L1242.1 1086.8 L1239.5 1084.4 L1237.4 1081.6 L1234.6 1079.4 L1230.8 1077.3 L1226.7 1075.9 L1222.7 1074.3 L1219.1 1071.7 L1217.1 1075.4 L1213.5 1077.9 L1211.7 1081.7 L1208.7 1084.6 L1204.7 1082.9 L1200.9 1080.8 L1196.7 1079.5 L1193.2 1076.8 L1189.1 1077.2 L1184.9 1077.2 L1180.8 1076.4 L1176.6 1077.0 L1172.5 1076.8 L1169.3 1078.6 L1165.5 1079.0 L1162.5 1081.3 L1158.9 1082.2 L1155.8 1084.0 L1152.9 1086.5 L1149.3 1087.3 L1145.9 1088.8 L1142.3 1089.7 L1139.3 1091.9 L1135.7 1092.8 L1132.5 1094.6 L1129.4 1096.6 L1125.9 1097.6 L1122.0 1097.9 L1118.7 1100.2 L1114.7 1099.9 L1111.2 1102.0 L1107.6 1103.3 L1103.8 1103.9 L1100.0 1104.3 L1097.2 1101.4 L1093.8 1099.3 L1091.9 1096.2 L1088.2 1095.0 L1086.3 1091.9 L1083.9 1089.4 L1081.8 1086.5 L1078.9 1084.4 L1074.8 1084.0 L1070.9 1082.4 L1066.9 1081.7 L1063.1 1079.8 L1059.0 1079.4 L1055.0 1079.3 L1051.1 1077.6 L1047.0 1078.3 L1043.0 1078.0 L1039.1 1077.0 L1035.8 1078.5 L1032.9 1080.7 L1030.2 1083.2 L1026.7 1084.4 L1024.6 1088.0 L1023.6 1092.2 L1020.6 1095.3 L1019.2 1099.3 L1018.9 1095.5 L1018.5 1091.8 L1017.6 1088.1 L1016.7 1084.4 L1012.5 1083.8 L1008.4 1082.9 L1004.3 1081.9 L1000.4 1082.8 L996.2 1082.7 L992.5 1084.9 L988.2 1084.3 L984.4 1085.7 L980.7 1086.0 L977.2 1085.1 L973.7 1084.5 L970.3 1082.8 L966.7 1083.0 L963.1 1082.7 L959.6 1081.9 L956.3 1080.3 L952.5 1080.4 L949.1 1079.0 L945.7 1077.9 L942.2 1077.0 L940.0 1074.2 L937.6 1071.7 L934.9 1069.3 L932.1 1067.2 L929.8 1064.5 L926.3 1063.1 L922.9 1061.8 L920.1 1059.0 L916.7 1057.6 L913.4 1055.9 L909.9 1054.6 L906.3 1053.5 L903.3 1051.4 L900.0 1049.6 L896.7 1047.4 L892.9 1045.9 L889.0 1044.9 L885.7 1042.6 L882.5 1040.1 L878.4 1039.4 L875.1 1037.2 L872.2 1035.1 L869.9 1032.5 L867.9 1029.5 L865.6 1026.8 L862.2 1025.2 L860.2 1022.3 L855.7 1021.4 L851.5 1019.8 L847.3 1017.9 L845.8 1021.5 L843.8 1024.8 L842.1 1028.3 L837.0 1025.7 L833.2 1024.1 L829.9 1021.6 L826.6 1019.2 L823.1 1018.1 L820.5 1015.2 L817.1 1014.0 L813.7 1012.7 L809.3 1010.1 L805.9 1006.3 L801.8 1004.2 L797.1 1004.4 L793.0 1002.4 L790.2 999.5 L788.5 995.8 L785.2 993.3 L785.1 989.0 L784.3 984.8 L783.1 980.7 L782.6 976.5 L780.5 973.4 L779.7 969.7 L777.3 966.7 L775.9 963.3 L774.8 959.7 L778.7 958.4 L783.9 958.4 L787.3 960.8 L790.4 963.5 L791.3 959.7 L793.6 956.6 L795.5 953.2 L794.7 949.2 L793.3 945.3 L791.7 941.6 L790.4 937.7 L788.0 934.1 L785.1 930.8 L782.6 927.3 L781.5 923.5 L781.9 919.5 L781.3 915.7 L784.5 913.6 L787.8 911.8 L785.2 906.6 L781.9 904.9 L778.5 903.3 L774.8 902.7 L772.1 898.3 L769.7 893.7 L768.9 889.4 L768.2 885.1 L766.6 881.1 L765.8 876.8 L762.2 876.9 L758.7 875.6 L755.1 874.9 L751.5 874.7 L747.9 874.5 L744.4 873.8 L740.8 873.7 L737.2 873.4 L733.6 873.4 L730.0 872.9 L729.7 869.3 L730.2 865.8 L729.3 862.2 L729.9 858.6 L730.5 855.1 L730.4 851.5 L730.2 847.9 L729.6 844.4 L729.9 840.8 L729.9 837.2 L730.2 833.7 L729.8 830.1 L730.3 826.5 L730.8 823.0 L729.4 819.4 L730.3 815.8 L730.5 812.3 L729.8 808.7 L730.0 805.1 L730.9 801.6 L729.2 798.0 L730.1 794.4 L729.4 790.9 L730.5 787.3 L730.8 783.7 L730.0 780.2 L729.3 776.6 L730.1 773.0 L730.1 769.5 L730.4 765.9 L730.0 762.3 L730.3 758.8 L730.6 755.2 L730.0 751.6 L729.8 748.1 L730.8 744.5 L729.5 740.9 L730.3 737.4 L729.8 733.8 L730.5 730.2 L729.3 726.7 L730.9 723.1 L729.7 719.5 L729.2 716.0 L730.0 712.4 Z" fill="none" stroke="#cf7279" stroke-width="1.1" transform="translate(-0.8 -0.8)"/>
<path d="M787.8 909.5 L805.9 905.3 L813.7 891.1 L820.1 878.1 L834.4 879.4 L846.0 883.3 L860.0 879.4 L865.2 873.9 L875.1 870.1 L885.0 878.8 L909.9 878.8 L934.8 868.9 L954.6 861.4 L959.6 854.0 L984.4 850.2 L1006.8 847.8 L1030.0 858.2 L1044.8 853.8 L1070.1 858.2 L1062.7 844.9 L1074.5 830.0 L1059.7 812.2 L1056.7 794.4 L1049.3 794.4 L1050.8 788.5 L1083.4 776.6 L1099.8 770.6 L1101.3 770.6 L1116.1 767.7 L1133.9 779.5 L1148.8 791.4 L1172.5 794.4 L1191.8 800.3 L1205.2 788.5 L1208.1 769.2 L1231.9 776.6 L1249.7 772.1 L1267.5 785.5 L1279.4 791.4 L1294.3 794.4 L1309.1 809.2 L1324.0 812.2 L1338.8 841.9 L1344.7 856.7 L1332.8 877.5 L1323.9 898.3 L1326.9 913.2 L1312.0 913.2 L1297.2 910.2 L1306.1 925.0 L1319.5 931.0 L1324.0 939.9 L1315.0 942.8 L1297.2 954.7 L1279.4 948.8 L1264.6 948.8 L1249.7 939.9 L1243.8 922.0 L1231.9 916.1 L1220.0 919.1 L1214.1 936.9 L1221.5 954.7 L1217.0 969.6 L1234.6 965.5 L1245.0 988.8 L1250.1 1007.0 L1255.3 1053.5 L1245.0 1056.1 L1239.8 1076.8 L1219.1 1071.7 L1208.7 1084.6 L1193.2 1076.8 L1172.5 1076.8 L1125.9 1097.6 L1100.0 1104.3 L1093.8 1099.3 L1078.9 1084.4 L1059.0 1079.4 L1039.1 1077.0 L1026.7 1084.4 L1019.2 1099.3 L1016.7 1084.4 L1004.3 1081.9 L984.4 1085.7 L959.6 1081.9 L942.2 1077.0 L929.8 1064.5 L909.9 1054.6 L900.0 1049.6 L875.1 1037.2 L860.2 1022.3 L847.3 1017.9 L842.1 1028.3 L837.0 1025.7 L826.6 1019.2 L813.7 1012.7 L805.9 1006.3 L793.0 1002.4 L785.2 993.3 L782.6 976.5 L774.8 959.7 L778.7 958.4 L783.9 958.4 L790.4 963.5 L795.5 953.2 L790.4 937.7 L782.6 927.3 L781.3 915.7 L787.8 911.8 Z" fill="#b6c3f5"/>
<path d="M1217.0 969.6 L1221.5 954.7 L1214.1 936.9 L1220.0 919.1 L1231.9 916.1 L1243.8 922.0 L1249.7 939.9 L1264.6 948.8 L1279.4 948.8 L1297.2 954.7 L1315.0 942.8 L1324.0 939.9 L1326.9 919.0 L1338.8 913.2 L1347.7 916.1 L1365.5 937.0 L1380.4 951.7 L1404.1 951.7 L1416.0 948.8 L1430.8 954.7 L1445.7 963.6 L1466.0 969.6 L1466.0 994.0 L1453.9 1006.6 L1436.5 1025.6 L1414.4 1017.7 L1408.0 1025.6 L1401.7 1039.8 L1411.2 1052.5 L1418.0 1058.0 L1414.3 1061.0 L1410.5 1070.5 L1423.9 1082.9 L1418.1 1085.7 L1402.9 1087.6 L1395.3 1081.0 L1380.0 1080.0 L1380.0 1066.7 L1368.6 1064.8 L1347.6 1097.2 L1345.7 1120.0 L1319.0 1131.5 L1309.5 1112.4 L1300.0 1095.3 L1291.6 1084.6 L1281.2 1076.8 L1268.3 1061.3 L1257.9 1071.7 L1239.8 1076.8 L1245.0 1056.1 L1255.3 1053.5 L1250.1 1007.0 L1245.0 988.8 L1234.6 965.5 Z" fill="#a6b6ee"/>
<path d="M1466.0 993.9 L1453.9 1006.6 L1436.5 1025.6 L1414.4 1017.7 L1408.0 1025.6 L1401.7 1039.8 L1411.2 1052.5 L1422.3 1058.8 L1428.6 1068.3 L1442.8 1062.0 L1466.0 1054.0 Z" fill="#e2e3e6"/>
<path d="M787.8 909.5 L791.3 908.3 L795.0 907.7 L798.5 906.2 L802.3 906.0 L805.9 905.3 L807.7 901.7 L810.1 898.4 L811.5 894.5 L813.7 891.1 L815.0 887.7 L816.5 884.4 L818.8 881.5 L820.1 878.1 L823.6 879.1 L827.2 878.8 L830.9 878.6 L834.4 879.4 L838.1 881.2 L842.2 881.8 L846.0 883.3 L849.4 881.9 L852.8 880.8 L856.6 880.8 L860.0 879.4 L863.0 877.0 L865.2 873.9 L868.6 872.8 L871.8 871.3 L875.1 870.1 L878.3 873.1 L882.0 875.6 L885.0 878.8 L888.6 879.5 L892.1 878.6 L895.7 879.0 L899.2 879.3 L902.8 879.3 L906.3 878.7 L909.9 878.8 L913.3 877.1 L917.0 876.0 L920.3 874.0 L924.3 873.6 L927.6 871.5 L931.5 870.8 L934.8 868.9 L938.0 867.3 L941.3 866.2 L944.6 864.8 L948.0 863.8 L951.1 862.2 L954.6 861.4 L956.4 857.3 L959.6 854.0 L963.2 853.8 L966.6 852.6 L970.2 852.0 L973.7 851.5 L977.3 851.3 L980.8 850.6 L984.4 850.2 L988.2 850.0 L991.9 849.7 L995.6 848.8 L999.4 849.3 L1003.1 848.8 L1006.8 847.8 L1010.4 848.6 L1013.2 851.3 L1016.5 852.8 L1019.9 854.2 L1023.6 854.7 L1026.5 857.2 L1030.0 858.2" fill="none" stroke="#fff" stroke-width="2" stroke-linejoin="round"/>
<path d="M1194.8 657.8 L1191.7 659.6 L1189.3 662.4 L1185.9 663.8 L1187.1 667.4 L1185.9 671.3 L1186.8 674.9 L1187.4 678.6 L1184.6 680.9 L1181.8 683.1 L1178.8 685.0 L1175.7 686.9 L1172.2 688.1 L1169.5 690.5 L1165.1 692.2 L1160.6 693.4 L1158.0 696.1 L1154.3 697.4 L1151.4 699.7 L1149.1 702.8 L1145.4 704.1 L1142.7 706.7 L1139.6 708.7 L1136.9 711.3 L1134.7 715.1 L1132.4 718.9 L1131.0 723.1 L1127.4 722.9 L1123.8 723.2 L1120.3 724.5 L1116.7 724.0 L1113.1 724.6 L1112.0 728.0 L1110.6 731.2 L1110.0 734.7 L1108.2 737.9 L1107.7 741.4 L1107.0 745.0 L1106.0 748.3 L1105.1 751.8 L1103.5 755.0 L1103.0 758.5 L1101.3 761.7 L1100.6 766.2 L1099.8 770.6 L1095.9 772.6 L1091.6 773.6 L1087.5 775.1 L1083.4 776.6 L1079.8 777.9 L1076.0 778.7 L1072.8 781.3 L1068.7 781.4 L1065.3 783.3 L1061.6 784.4 L1058.0 785.6 L1054.2 786.7 L1050.8 788.5 L1049.3 794.4 L1053.0 794.2 L1056.7 794.4 L1057.4 797.9 L1057.2 801.6 L1059.2 805.0 L1058.9 808.7 L1059.7 812.2 L1062.0 815.3 L1065.2 817.7 L1067.0 821.2 L1069.3 824.3 L1071.5 827.5 L1074.5 830.0 L1072.4 833.1 L1069.2 835.5 L1067.4 838.9 L1065.1 841.9 L1062.7 844.9 L1064.0 848.5 L1067.1 851.2 L1067.9 855.0 L1070.1 858.2 L1066.5 857.4 L1062.8 857.2 L1059.4 855.7 L1055.6 855.9 L1052.0 855.1 L1048.4 854.4 L1044.8 853.8 L1041.0 854.5 L1037.5 856.4 L1033.7 857.2 L1030.0 858.2" fill="none" stroke="#fff" stroke-width="2" stroke-linejoin="round"/>
<path d="M1101.3 770.6 L1105.0 769.8 L1108.7 769.2 L1112.5 768.9 L1116.1 767.7 L1119.2 769.4 L1121.7 772.1 L1125.1 773.5 L1128.0 775.6 L1131.1 777.2 L1133.9 779.5 L1136.9 781.9 L1139.4 784.9 L1142.7 786.8 L1145.5 789.4 L1148.8 791.4 L1152.8 791.6 L1156.7 792.1 L1160.7 792.6 L1164.6 793.5 L1168.5 794.1 L1172.5 794.4 L1176.2 796.0 L1180.4 796.1 L1184.0 798.3 L1187.8 799.7 L1191.8 800.3 L1194.5 798.0 L1196.7 795.0 L1199.6 793.0 L1202.0 790.3 L1205.2 788.5 L1205.3 784.6 L1207.0 780.9 L1207.1 776.9 L1207.8 773.1 L1208.1 769.2 L1211.4 770.7 L1214.7 771.9 L1218.2 772.5 L1221.6 773.6 L1225.0 774.7 L1228.4 775.8 L1231.9 776.6 L1235.5 775.8 L1239.1 775.1 L1242.5 773.5 L1246.2 773.3 L1249.7 772.1 L1252.7 774.3 L1255.4 776.9 L1259.0 778.3 L1261.9 780.6 L1265.0 782.7 L1267.5 785.5 L1271.3 787.9 L1275.1 790.0 L1279.4 791.4 L1283.1 792.4 L1286.9 792.7 L1290.5 794.2 L1294.3 794.4 L1296.9 797.7 L1300.1 800.4 L1303.5 803.0 L1306.4 806.0 L1309.1 809.2 L1312.8 809.8 L1316.6 810.4 L1320.3 811.3 L1324.0 812.2 L1325.4 815.6 L1326.7 819.1 L1329.6 821.8 L1330.5 825.4 L1332.9 828.4 L1334.4 831.7 L1335.1 835.5 L1337.0 838.7 L1338.8 841.9 L1339.7 845.8 L1341.8 849.3 L1343.9 852.7 L1344.7 856.7 L1342.9 860.3 L1340.6 863.6 L1338.1 866.8 L1336.1 870.2 L1334.8 874.1 L1332.8 877.5 L1331.4 881.0 L1330.4 884.7 L1328.1 887.8 L1327.3 891.5 L1325.9 895.1 L1323.9 898.3 L1325.4 901.9 L1326.2 905.6 L1325.9 909.5 L1326.9 913.2 L1323.2 913.8 L1319.5 912.5 L1315.7 913.9 L1312.0 913.2 L1308.4 911.9 L1304.5 912.3 L1300.7 911.7 L1297.2 910.2 L1299.1 914.1 L1302.0 917.4 L1303.6 921.5 L1306.1 925.0 L1309.7 926.0 L1313.1 927.3 L1316.0 929.9 L1319.5 931.0 L1321.4 935.6 L1324.0 939.9 L1319.3 940.8 L1315.0 942.8 L1311.8 944.5 L1309.4 947.3 L1306.0 948.6 L1302.9 950.5 L1300.2 952.8 L1297.2 954.7 L1293.9 952.9 L1290.0 952.7 L1286.8 950.5 L1283.1 949.7 L1279.4 948.8 L1275.7 949.6 L1272.0 949.6 L1268.3 948.6 L1264.6 948.8 L1261.1 946.1 L1256.8 944.9 L1253.3 942.4 L1249.7 939.9 L1248.9 936.2 L1246.8 932.9 L1246.7 929.0 L1245.0 925.6 L1243.8 922.0 L1239.5 920.7 L1235.8 918.3 L1231.9 916.1 L1227.9 917.0 L1224.0 918.2 L1220.0 919.1 L1218.6 922.6 L1218.2 926.4 L1216.0 929.6 L1215.5 933.4 L1214.1 936.9 L1215.4 940.5 L1216.9 944.1 L1218.7 947.5 L1220.2 951.1 L1221.5 954.7 L1219.9 958.3 L1218.6 961.9 L1217.7 965.7 L1217.0 969.6 L1213.5 971.2 L1210.2 973.4 L1207.0 975.4 L1202.9 975.9 L1199.6 978.0 L1196.3 980.0" fill="none" stroke="#fff" stroke-width="2" stroke-linejoin="round"/>
<path d="M1030.0 858.2 L1030.7 862.2 L1032.6 865.8 L1033.4 869.8 L1034.0 873.9 L1035.9 877.5 L1034.8 881.0 L1034.6 884.6 L1034.5 888.2 L1033.7 891.8 L1033.0 895.3 L1033.6 899.1 L1035.5 902.4 L1036.3 906.1 L1037.6 909.7 L1038.9 913.2 L1039.3 917.3 L1040.4 921.2 L1041.9 925.0 L1044.4 928.5 L1047.0 932.0 L1048.9 936.0 L1050.8 939.9 L1054.8 940.8 L1058.7 942.0 L1062.5 943.3 L1066.5 944.4 L1070.7 944.1 L1074.5 945.8 L1077.7 947.6 L1081.1 948.8 L1084.5 950.2 L1088.1 951.0 L1091.6 951.8 L1094.7 954.0 L1098.3 954.7 L1101.8 955.8 L1105.4 956.2 L1108.9 957.2 L1112.6 956.9 L1116.2 957.0 L1119.6 958.4 L1123.1 959.4 L1126.9 959.0 L1130.3 960.5 L1133.9 960.7 L1137.5 962.1 L1141.4 961.8 L1145.0 963.1 L1148.7 963.9 L1152.5 964.3 L1156.3 964.7 L1160.0 965.5 L1163.6 966.6 L1166.7 968.3 L1170.0 969.7 L1173.4 970.6 L1176.9 971.3 L1179.8 973.8 L1183.1 975.0 L1186.7 975.6 L1189.7 977.4 L1192.8 979.2 L1196.3 980.0" fill="none" stroke="#fff" stroke-width="2" stroke-linejoin="round"/>
<path d="M1212.6 657.8 L1213.4 661.6 L1215.2 664.9 L1216.7 668.5 L1217.8 672.1 L1219.8 675.4 L1221.1 679.0 L1222.5 682.5 L1223.0 686.4 L1224.9 689.8 L1226.0 693.4 L1223.7 696.3 L1221.5 699.4 L1224.3 702.3 L1226.9 705.4 L1230.1 707.9 L1232.9 710.8 L1234.5 714.8 L1237.8 717.2 L1239.5 721.6 L1240.8 726.1 L1244.1 723.8 L1248.0 722.7 L1251.7 721.2 L1254.8 718.5 L1258.6 717.2 L1262.7 717.7 L1266.9 717.6 L1271.1 718.1 L1275.3 717.6 L1279.4 718.7 L1281.1 723.0 L1280.6 727.7 L1282.4 732.0 L1279.3 734.3 L1276.9 737.5 L1274.1 740.1 L1271.7 743.2 L1268.4 745.4 L1266.0 748.4 L1269.9 749.8 L1273.5 752.0 L1277.4 753.2 L1281.3 754.8 L1285.3 755.8 L1287.8 759.3 L1291.5 761.5 L1294.7 764.2 L1297.2 767.7 L1300.5 769.8 L1303.5 772.2 L1306.5 774.6 L1309.5 777.0 L1312.0 780.1 L1315.0 782.5 L1317.7 779.9 L1319.4 776.5 L1322.3 774.0 L1324.0 770.6 L1327.7 770.4 L1331.0 768.2 L1334.7 768.1 L1338.2 766.9 L1341.8 766.2 L1346.4 767.1 L1350.7 769.2 L1354.5 768.4 L1357.7 765.8 L1361.4 764.8 L1365.0 763.4 L1368.5 761.7 L1370.9 765.2 L1374.4 767.7 L1372.1 770.9 L1370.3 774.6 L1368.1 777.9 L1366.4 781.5 L1363.2 784.2 L1361.0 787.6 L1359.6 791.4 L1359.0 795.5 L1358.3 799.5 L1356.6 803.3 L1359.3 805.7 L1361.5 808.5 L1363.3 811.8 L1365.6 814.4 L1368.5 816.7 L1372.1 818.0 L1376.0 817.4 L1379.5 819.3 L1383.3 819.6 L1387.1 818.6 L1390.8 817.2 L1394.7 816.4 L1397.9 813.7 L1401.7 812.6 L1405.7 812.2 L1409.5 811.2 L1413.0 809.2 L1413.7 805.4 L1413.5 801.5 L1414.4 797.8 L1415.1 794.0 L1414.5 790.1 L1415.3 786.3 L1416.0 782.5 L1418.2 779.3 L1420.5 776.2 L1423.4 773.6 L1425.5 770.3 L1428.0 767.4 L1430.8 764.7 L1431.8 768.5 L1431.4 772.4 L1432.9 776.1 L1432.2 780.0 L1433.4 783.7 L1434.1 787.5 L1433.8 791.4 L1436.4 794.2 L1440.0 795.5 L1442.3 798.6 L1445.7 800.3 L1448.8 802.8 L1452.2 804.8 L1456.1 805.8 L1459.3 808.2 L1462.9 809.7 L1466.0 812.2" fill="none" stroke="#fff" stroke-width="2" stroke-linejoin="round"/>
<path d="M1383.3 819.6 L1385.2 822.7 L1387.7 825.3 L1390.3 827.8 L1392.9 830.3 L1395.2 833.0 L1396.4 836.4 L1396.7 840.1 L1398.2 843.4 L1398.9 846.9 L1400.7 850.2 L1401.1 853.8 L1402.7 857.2 L1404.1 860.7 L1404.3 864.6 L1405.7 868.1 L1407.0 871.6 L1409.0 875.1 L1409.5 879.2 L1411.8 882.6 L1413.0 886.4 L1416.0 883.5 L1420.0 885.3 L1424.1 886.9 L1427.8 889.4 L1429.2 893.3 L1429.3 897.5 L1430.8 901.3 L1429.6 905.8 L1427.8 910.2 L1427.3 914.3 L1425.9 918.1 L1424.9 922.0 L1424.2 926.0 L1422.3 929.8 L1421.9 933.9 L1417.6 936.0 L1413.0 936.9 L1411.3 940.7 L1411.7 945.0 L1410.0 948.8" fill="none" stroke="#fff" stroke-width="2" stroke-linejoin="round"/>
<path d="M1430.8 801.0 L1430.2 804.6 L1430.5 808.2 L1431.3 811.9 L1430.8 815.5 L1431.1 819.1 L1431.2 822.8 L1431.3 826.4 L1430.8 830.0 L1430.4 833.6 L1428.8 837.0 L1428.2 840.5 L1427.7 844.1 L1427.8 847.8 L1430.1 850.9 L1431.5 854.5 L1432.3 858.3 L1435.2 861.1 L1435.9 865.0 L1438.2 868.1 L1439.6 871.6 L1436.2 872.9 L1434.2 876.2 L1430.8 877.5 L1429.3 881.3 L1429.0 885.5 L1427.8 889.4" fill="none" stroke="#fff" stroke-width="2" stroke-linejoin="round"/>
<path d="M1448.7 809.2 L1448.8 812.7 L1448.5 816.2 L1446.7 819.5 L1446.7 823.1 L1446.7 826.6 L1445.7 830.0 L1448.7 832.9 L1451.1 836.4 L1454.9 838.6 L1457.5 841.9 L1461.7 843.5 L1466.0 844.9" fill="none" stroke="#fff" stroke-width="2" stroke-linejoin="round"/>
<path d="M1324.0 939.9 L1323.9 936.3 L1324.5 932.9 L1325.9 929.5 L1326.3 926.0 L1325.9 922.4 L1326.9 919.0 L1330.6 916.5 L1334.5 914.5 L1338.8 913.2 L1343.2 914.8 L1347.7 916.1 L1350.2 919.1 L1353.1 921.8 L1355.7 924.8 L1357.7 928.2 L1360.2 931.2 L1362.6 934.3 L1365.5 937.0 L1368.4 940.0 L1371.8 942.5 L1374.9 945.3 L1377.2 949.0 L1380.4 951.7 L1384.4 951.6 L1388.3 952.1 L1392.2 951.0 L1396.2 952.2 L1400.1 951.4 L1404.1 951.7 L1408.2 951.3 L1412.2 950.3 L1416.0 948.8 L1419.7 950.3 L1423.7 951.0 L1426.9 953.8 L1430.8 954.7 L1434.5 956.9 L1437.9 959.7 L1442.2 961.1 L1445.7 963.6 L1449.2 964.1 L1452.3 966.1 L1455.9 966.4 L1459.4 967.1 L1462.7 968.4 L1466.0 969.6" fill="none" stroke="#fff" stroke-width="2" stroke-linejoin="round"/>
<path d="M1402.9 1087.6 L1399.4 1088.4 L1396.3 1090.3 L1392.6 1090.4 L1389.2 1091.5 L1385.7 1092.4 L1382.5 1093.9 L1378.8 1094.0 L1375.3 1094.8 L1371.9 1095.7 L1368.6 1097.2 L1366.9 1100.5 L1364.5 1103.4 L1362.9 1106.7 L1365.0 1111.4 L1366.7 1116.2 L1370.4 1117.5 L1374.5 1117.4 L1378.0 1119.6 L1381.9 1120.0 L1381.6 1123.9 L1382.7 1127.6 L1383.0 1131.5 L1383.4 1135.3 L1383.8 1139.1 L1385.2 1142.9 L1387.4 1146.4 L1387.5 1150.8 L1389.6 1154.3 L1388.6 1158.3 L1387.2 1162.1 L1385.8 1166.0 L1383.8 1169.6 L1387.1 1171.6 L1389.6 1174.6 L1393.4 1175.8 L1396.4 1178.2 L1399.1 1181.0 L1402.8 1182.1 L1406.8 1182.0 L1410.7 1182.5 L1414.3 1184.2 L1418.1 1184.8 L1418.9 1188.6 L1420.0 1192.4 L1417.1 1195.2 L1414.1 1197.9 L1411.9 1201.5 L1408.6 1203.9" fill="none" stroke="#fff" stroke-width="2" stroke-linejoin="round"/>
<path d="M1387.7 1163.9 L1391.5 1164.3 L1395.3 1163.8 L1399.1 1162.5 L1402.9 1162.3 L1406.7 1162.7 L1410.5 1162.5 L1414.3 1161.9 L1418.1 1162.0 L1421.1 1159.6 L1424.7 1158.0 L1427.8 1155.8 L1431.5 1154.5 L1435.1 1152.9 L1437.8 1150.0 L1441.5 1148.7 L1444.8 1146.7 L1448.2 1148.3 L1452.0 1148.7 L1455.2 1151.0 L1458.7 1152.4 L1462.5 1152.9 L1466.0 1154.3" fill="none" stroke="#fff" stroke-width="2" stroke-linejoin="round"/>
<path d="M1219.1 1071.7 L1222.6 1072.4 L1225.9 1073.9 L1229.4 1074.3 L1232.9 1074.9 L1236.2 1076.6 L1239.8 1076.8" fill="none" stroke="#fff" stroke-width="2" stroke-linejoin="round"/>
<path d="M1217.0 969.6 L1221.5 954.7 L1214.1 936.9 L1220.0 919.1 L1231.9 916.1 L1243.8 922.0 L1249.7 939.9 L1264.6 948.8 L1279.4 948.8 L1297.2 954.7 L1315.0 942.8 L1324.0 939.9 L1326.9 919.0 L1338.8 913.2 L1347.7 916.1 L1365.5 937.0 L1380.4 951.7 L1404.1 951.7 L1416.0 948.8 L1430.8 954.7 L1445.7 963.6 L1466.0 969.6 L1466.0 994.0 L1453.9 1006.6 L1436.5 1025.6 L1414.4 1017.7 L1408.0 1025.6 L1401.7 1039.8 L1411.2 1052.5 L1418.0 1058.0 L1414.3 1061.0 L1410.5 1070.5 L1423.9 1082.9 L1418.1 1085.7 L1402.9 1087.6 L1395.3 1081.0 L1380.0 1080.0 L1380.0 1066.7 L1368.6 1064.8 L1347.6 1097.2 L1345.7 1120.0 L1319.0 1131.5 L1309.5 1112.4 L1300.0 1095.3 L1291.6 1084.6 L1281.2 1076.8 L1268.3 1061.3 L1257.9 1071.7 L1239.8 1076.8 L1245.0 1056.1 L1255.3 1053.5 L1250.1 1007.0 L1245.0 988.8 L1234.6 965.5 Z" fill="none" stroke="#fff" stroke-width="2" stroke-linejoin="round"/>
<path d="M1466.0 993.9 L1453.9 1006.6 L1436.5 1025.6 L1414.4 1017.7 L1408.0 1025.6 L1401.7 1039.8 L1411.2 1052.5 L1422.3 1058.8 L1428.6 1068.3 L1442.8 1062.0 L1466.0 1054.0" fill="none" stroke="#fff" stroke-width="2" stroke-linejoin="round"/>
</svg>
</div>

<!-- map overlays -->
<div class="a" style="left:738px;top:366px;width:727px;height:940px;overflow:hidden">
<div class="t" style="left:201.0px;top:234.0px;width:100px;text-align:center;color:#3b4866">新疆</div><div class="t" style="left:201.0px;top:258.0px;width:100px;text-align:center;color:#3b4866">38</div>
<div class="t" style="left:283.0px;top:649.0px;width:100px;text-align:center;color:#3b4866">西藏</div><div class="t" style="left:283.0px;top:672.0px;width:100px;text-align:center;color:#3b4866">2</div>
<div class="t" style="left:584.0px;top:623.0px;width:100px;text-align:center;color:#3b4866">四川</div><div class="t" style="left:584.0px;top:647.0px;width:100px;text-align:center;color:#3b4866">157</div>
<div class="t" style="left:644.0px;top:728.0px;width:100px;text-align:center;color:#3b4866">贵州</div><div class="t" style="left:644.0px;top:751.0px;width:100px;text-align:center;color:#3b4866">36</div>
<div class="t" style="left:556.0px;top:774.0px;width:100px;text-align:center;color:#3b4866">云南</div><div class="t" style="left:556.0px;top:797.0px;width:100px;text-align:center;color:#3b4866">36</div>
<div class="t" style="left:674.0px;top:824.0px;width:100px;text-align:center;color:#3b4866">广</div><div class="t" style="left:674.0px;top:849.0px;width:100px;text-align:center;color:#3b4866">8</div>
<div class="t" style="left:634.7px;top:400.0px;width:100px;text-align:center;color:#3b4866">宁夏</div><div class="t" style="left:634.7px;top:423.0px;width:100px;text-align:center;color:#3b4866">9</div>
<div class="t" style="left:531.8px;top:454.0px;width:100px;text-align:center;color:#3b4866">青海</div><div class="t" style="left:531.8px;top:477.6px;width:100px;text-align:center;color:#3b4866">3</div>
<div class="t" style="left:579.4px;top:470.0px;width:100px;text-align:center;color:#3b4866">甘肃</div><div class="t" style="left:579.4px;top:494.0px;width:100px;text-align:center;color:#3b4866">32</div>
<div class="a" style="left:17px;top:18px;width:42px;height:86px;background:#fff;border-radius:5px;box-shadow:0 1px 4px rgba(0,0,0,0.18)"></div>
<div class="a" style="left:17px;top:60px;width:42px;height:1px;background:#e6e6e6"></div>
<svg class="a" style="left:17px;top:18px" width="42" height="86" viewBox="0 0 42 86"><path d="M21 13.5 V27.5 M14 20.5 H28" stroke="#595959" stroke-width="1.6"/><path d="M14 65.5 H28" stroke="#595959" stroke-width="2.6"/></svg>
</div>
<svg class="a" style="left:738px;top:1272px" width="32" height="32" viewBox="0 0 32 32"><path d="M2 4 L9 2 L9 13 L2 14Z" fill="#a8dd8a" opacity="0.9"/><path d="M20 22 L29 21 L29 30 L21 30Z" fill="#8fd6ee" opacity="0.9"/><path d="M28 4 L4 16 L13 18 L16 28 Z" fill="#1c7ae8"/><path d="M28 4 L13 18 L16 28Z" fill="#0f5fc8"/></svg>
<div class="t" style="left:772px;top:1277px;font-size:21px;font-weight:bold;color:#141414;letter-spacing:0.5px">高德地图</div>
<div class="t" style="left:865px;top:1280px;font-size:19.8px;color:#3b4866">© 2023 AutoNavi - GS(2021)6375号</div>
<div class="t" style="left:1088px;top:1319px;font-size:37px;font-weight:bold;color:#111">头条 @数据分析孙斌</div><div class="t" style="left:1089.5px;top:1317.5px;font-size:37px;color:#fff">头条 @数据分析孙斌</div>
<div class="a" style="left:737px;top:1339px;width:23px;height:23px;border:1.5px solid #b9bcc2;border-radius:3px;background:#fff"></div>
<div class="t" style="left:770px;top:1340px;color:#4a5163">查看所有数据</div>

<div class="a" style="left:0;top:1390px;width:1465px;height:1px;background:#bfbfbf"></div>

<div class="a" style="left:319px;top:754px;width:3px;height:3px;border-radius:50%;background:#3a4150;box-shadow:0 9px 0 #3a4150,0 18px 0 #3a4150,11px 0 0 #3a4150,11px 9px 0 #3a4150,11px 18px 0 #3a4150"></div>
</body></html>
